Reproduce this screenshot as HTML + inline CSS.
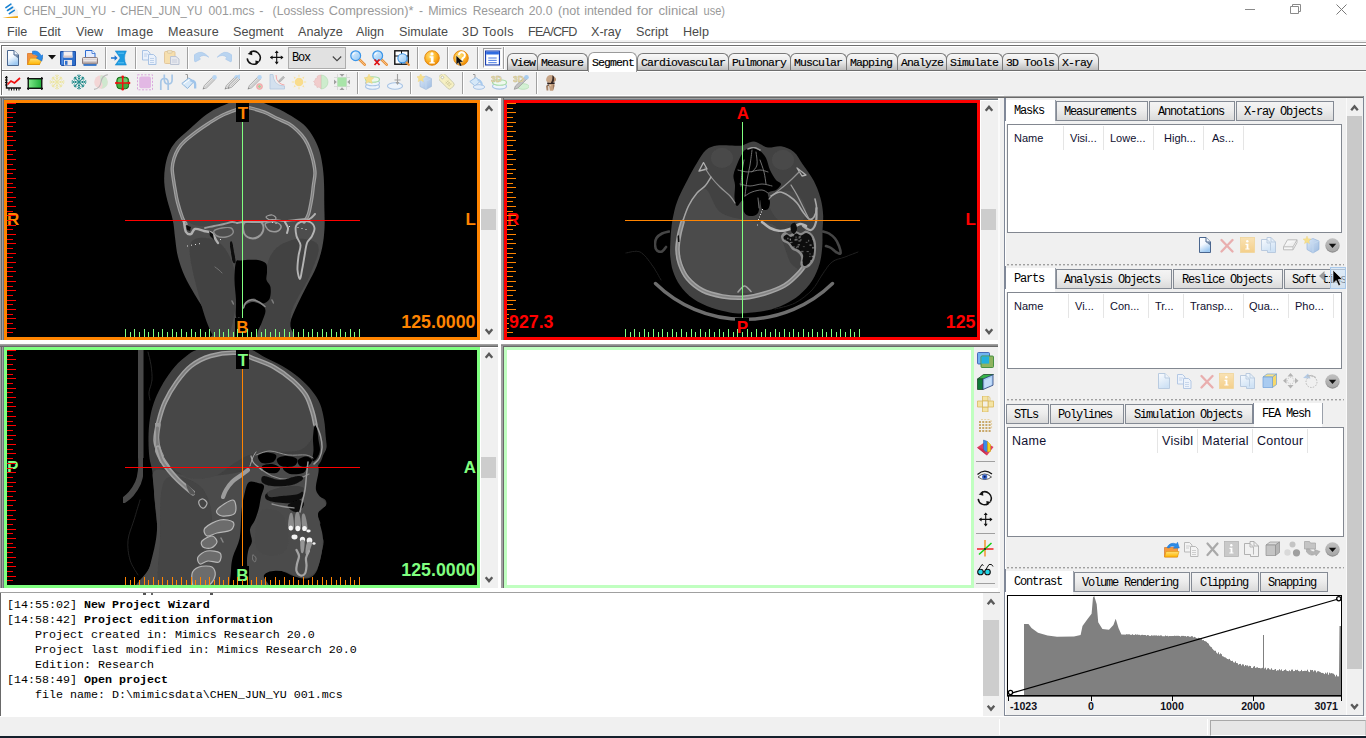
<!DOCTYPE html>
<html><head><meta charset="utf-8"><title>Mimics</title>
<style>
html,body{margin:0;padding:0;}
body{width:1366px;height:738px;overflow:hidden;background:#f0f0f0;position:relative;font-family:"Liberation Sans",sans-serif;}
div,span,svg{position:absolute;box-sizing:border-box;}
.t{white-space:pre;line-height:1;}
.mono{font-family:"Liberation Mono",monospace;}
.tab{font-family:"Liberation Mono",monospace;font-size:12px;letter-spacing:-1.2px;color:#000;white-space:pre;line-height:1;}
.hd{font-size:11px;color:#101030;white-space:pre;line-height:1;}
.hd2{font-size:12.5px;letter-spacing:0.3px;color:#101030;white-space:pre;line-height:1;}
.lbl{font-weight:bold;white-space:pre;line-height:1;}
.log{font-family:"Liberation Mono",monospace;font-size:11.67px;color:#000;white-space:pre;line-height:1;}
.log b{font-weight:bold;}
.btab{border:1px solid #848a94;background:linear-gradient(#f4f4f4,#ededed 45%,#dadada);}
</style></head>
<body>
<div style="left:0px;top:0px;width:1366px;height:41px;background:#fff;"></div>
<svg style="left:0px;top:0px;" width="20" height="20" viewBox="0 0 20 20"><path d="M11 4.200l7 6v6.500l-8.500-2z" fill="#f3f3f3"/><path d="M5.900 7.600l5-3.400M7.500 10.500l5.100-3.200M9.300 13.600l5-3.200" stroke="#1580d2" stroke-width="1.600" stroke-linecap="round"/><path d="M2.400 17.400q8-.300 15.500-1.300v1.900q-8 .300-15.500-.600z" fill="#f0a818"/></svg>
<svg style="left:0;top:0" width="740" height="22" viewBox="0 0 740 22"><g font-family="Liberation Sans" font-size="12.4" fill="#999"><text x="23.6" y="15.2" textLength="82.7" lengthAdjust="spacingAndGlyphs">CHEN_JUN_YU</text><text x="111.3" y="15.2" textLength="4.1" lengthAdjust="spacingAndGlyphs">-</text><text x="120.2" y="15.2" textLength="82.3" lengthAdjust="spacingAndGlyphs">CHEN_JUN_YU</text><text x="208.6" y="15.2" textLength="45.9" lengthAdjust="spacingAndGlyphs">001.mcs</text><text x="259.2" y="15.2" textLength="4.2" lengthAdjust="spacingAndGlyphs">-</text><text x="272.6" y="15.2" textLength="51.4" lengthAdjust="spacingAndGlyphs">(Lossless</text><text x="328.8" y="15.2" textLength="84.6" lengthAdjust="spacingAndGlyphs">Compression)*</text><text x="419" y="15.2" textLength="4.0" lengthAdjust="spacingAndGlyphs">-</text><text x="428.2" y="15.2" textLength="38.8" lengthAdjust="spacingAndGlyphs">Mimics</text><text x="472.7" y="15.2" textLength="51.3" lengthAdjust="spacingAndGlyphs">Research</text><text x="528.8" y="15.2" textLength="23.7" lengthAdjust="spacingAndGlyphs">20.0</text><text x="558" y="15.2" textLength="21.7" lengthAdjust="spacingAndGlyphs">(not</text><text x="584.2" y="15.2" textLength="47.6" lengthAdjust="spacingAndGlyphs">intended</text><text x="636.8" y="15.2" textLength="16.1" lengthAdjust="spacingAndGlyphs">for</text><text x="658.5" y="15.2" textLength="39.5" lengthAdjust="spacingAndGlyphs">clinical</text><text x="703.5" y="15.2" textLength="21.5" lengthAdjust="spacingAndGlyphs">use)</text></g></svg>
<svg style="left:1240px;top:0px" width="126" height="22" viewBox="0 0 126 22"><path d="M5 9.500h10" stroke="#8a8a8a" stroke-width="1" fill="none"/><path d="M50.500 6.500h8v7h-8z M52.500 6.500v-2h8v7h-2" stroke="#8a8a8a" stroke-width="1" fill="none"/><path d="M96.500 4.500l10 10M106.500 4.500l-10 10" stroke="#7a7a7a" stroke-width="1" fill="none"/></svg>
<span class="t m" style="left:7px;top:26px;font-size:12.6px;color:#4a4a4a;letter-spacing:0px;">File</span>
<span class="t m" style="left:39px;top:26px;font-size:12.6px;color:#4a4a4a;letter-spacing:0px;">Edit</span>
<span class="t m" style="left:76px;top:26px;font-size:12.6px;color:#4a4a4a;letter-spacing:0px;">View</span>
<span class="t m" style="left:117px;top:26px;font-size:12.6px;color:#4a4a4a;letter-spacing:0.3px;">Image</span>
<span class="t m" style="left:168px;top:26px;font-size:12.6px;color:#4a4a4a;letter-spacing:0.3px;">Measure</span>
<span class="t m" style="left:233px;top:26px;font-size:12.6px;color:#4a4a4a;letter-spacing:0px;">Segment</span>
<span class="t m" style="left:298px;top:26px;font-size:12.6px;color:#4a4a4a;letter-spacing:0px;">Analyze</span>
<span class="t m" style="left:356px;top:26px;font-size:12.6px;color:#4a4a4a;letter-spacing:0px;">Align</span>
<span class="t m" style="left:399px;top:26px;font-size:12.6px;color:#4a4a4a;letter-spacing:0px;">Simulate</span>
<span class="t m" style="left:462px;top:26px;font-size:12.6px;color:#4a4a4a;letter-spacing:0.4px;">3D Tools</span>
<span class="t m" style="left:528px;top:26px;font-size:12.6px;color:#4a4a4a;letter-spacing:-0.75px;">FEA/CFD</span>
<span class="t m" style="left:591px;top:26px;font-size:12.6px;color:#4a4a4a;letter-spacing:0px;">X-ray</span>
<span class="t m" style="left:636px;top:26px;font-size:12.6px;color:#4a4a4a;letter-spacing:0px;">Script</span>
<span class="t m" style="left:683px;top:26px;font-size:12.6px;color:#4a4a4a;letter-spacing:0px;">Help</span>
<div style="left:0px;top:40px;width:1366px;height:2px;background:#f0f0f0;"></div>
<div style="left:0px;top:42px;width:1366px;height:1px;background:#a0a0a0;"></div>
<div style="left:0px;top:43px;width:1366px;height:2px;background:#ffffff;"></div>
<div style="left:1px;top:45px;width:1365px;height:1px;background:#6e6e6e;"></div>
<div style="left:2px;top:46px;width:1364px;height:1px;background:#ffffff;"></div>
<div style="left:1px;top:45px;width:1px;height:25px;background:#6e6e6e;"></div>
<div style="left:2px;top:46px;width:1px;height:24px;background:#ffffff;"></div>
<div style="left:0px;top:45px;width:1px;height:51px;background:#ffffff;"></div>
<div style="left:2px;top:69px;width:503px;height:1px;background:#ffffff;"></div>
<div style="left:1px;top:70px;width:505px;height:1px;background:#6e6e6e;"></div>
<div style="left:2px;top:71px;width:504px;height:1px;background:#ffffff;"></div>
<div style="left:1px;top:71px;width:1px;height:24px;background:#6e6e6e;"></div>
<div style="left:2px;top:72px;width:1px;height:23px;background:#ffffff;"></div>
<div style="left:105px;top:47px;width:1px;height:22px;background:#a0a0a0;"></div>
<div style="left:106px;top:47px;width:1px;height:22px;background:#ffffff;"></div>
<div style="left:135px;top:47px;width:1px;height:22px;background:#a0a0a0;"></div>
<div style="left:136px;top:47px;width:1px;height:22px;background:#ffffff;"></div>
<div style="left:187px;top:47px;width:1px;height:22px;background:#a0a0a0;"></div>
<div style="left:188px;top:47px;width:1px;height:22px;background:#ffffff;"></div>
<div style="left:239px;top:47px;width:1px;height:22px;background:#a0a0a0;"></div>
<div style="left:240px;top:47px;width:1px;height:22px;background:#ffffff;"></div>
<div style="left:417px;top:47px;width:1px;height:22px;background:#a0a0a0;"></div>
<div style="left:418px;top:47px;width:1px;height:22px;background:#ffffff;"></div>
<div style="left:447px;top:47px;width:1px;height:22px;background:#a0a0a0;"></div>
<div style="left:448px;top:47px;width:1px;height:22px;background:#ffffff;"></div>
<div style="left:477px;top:47px;width:1px;height:22px;background:#a0a0a0;"></div>
<div style="left:478px;top:47px;width:1px;height:22px;background:#ffffff;"></div>
<div style="left:503px;top:47px;width:1px;height:22px;background:#a0a0a0;"></div>
<div style="left:504px;top:47px;width:1px;height:22px;background:#ffffff;"></div>
<div style="left:357px;top:72px;width:1px;height:22px;background:#a0a0a0;"></div>
<div style="left:358px;top:72px;width:1px;height:22px;background:#ffffff;"></div>
<div style="left:410px;top:72px;width:1px;height:22px;background:#a0a0a0;"></div>
<div style="left:411px;top:72px;width:1px;height:22px;background:#ffffff;"></div>
<div style="left:462px;top:72px;width:1px;height:22px;background:#a0a0a0;"></div>
<div style="left:463px;top:72px;width:1px;height:22px;background:#ffffff;"></div>
<div style="left:536px;top:72px;width:1px;height:22px;background:#a0a0a0;"></div>
<div style="left:537px;top:72px;width:1px;height:22px;background:#ffffff;"></div>
<div style="left:288px;top:47px;width:58px;height:22px;background:#e1e1e1;border:1px solid #adadad;"></div>
<span class="tab" style="left:292px;top:52px;">Box</span>
<svg style="left:332px;top:55px" width="10" height="8" viewBox="0 0 10 8"><path d="M.8 1.5l4.200 4.200 4.200-4.200" stroke="#444" stroke-width="1.100" fill="none"/></svg>
<div style="left:483px;top:48px;width:19px;height:20px;background:#f6f6f6;border-left:1px solid #a0a0a0;border-top:1px solid #a0a0a0;border-right:1px solid #fff;border-bottom:1px solid #fff;"></div>
<div style="left:506px;top:70px;width:860px;height:1px;background:#6e6e6e;"></div>
<div style="left:506px;top:71px;width:860px;height:1px;background:#ffffff;"></div>
<div style="left:507px;top:53px;width:31px;height:17px;background:linear-gradient(#f8f8f8,#e8e8e8 50%,#bdbdbd);border:1px solid #7a7a7a;border-bottom:none;border-radius:6px 6px 0 0;"></div>
<span class="tab" style="left:511px;top:56.5px;-webkit-text-stroke:0.15px #000;font-size:11.5px;letter-spacing:-0.9px;">View</span>
<div style="left:537px;top:53px;width:51px;height:17px;background:linear-gradient(#f8f8f8,#e8e8e8 50%,#bdbdbd);border:1px solid #7a7a7a;border-bottom:none;border-radius:6px 6px 0 0;"></div>
<span class="tab" style="left:541px;top:56.5px;-webkit-text-stroke:0.15px #000;font-size:11.5px;letter-spacing:-0.9px;">Measure</span>
<div style="left:588px;top:52px;width:49px;height:20px;background:#fff;border:1px solid #9a9a9a;border-bottom:none;border-radius:6px 6px 0 0;"></div>
<span class="tab" style="left:592px;top:56.5px;-webkit-text-stroke:0.15px #000;font-size:11.5px;letter-spacing:-0.9px;">Segment</span>
<div style="left:637px;top:53px;width:92px;height:17px;background:linear-gradient(#f8f8f8,#e8e8e8 50%,#bdbdbd);border:1px solid #7a7a7a;border-bottom:none;border-radius:6px 6px 0 0;"></div>
<span class="tab" style="left:641px;top:56.5px;-webkit-text-stroke:0.15px #000;font-size:11.5px;letter-spacing:-0.9px;">Cardiovascular</span>
<div style="left:728px;top:53px;width:63px;height:17px;background:linear-gradient(#f8f8f8,#e8e8e8 50%,#bdbdbd);border:1px solid #7a7a7a;border-bottom:none;border-radius:6px 6px 0 0;"></div>
<span class="tab" style="left:732px;top:56.5px;-webkit-text-stroke:0.15px #000;font-size:11.5px;letter-spacing:-0.9px;">Pulmonary</span>
<div style="left:790px;top:53px;width:57px;height:17px;background:linear-gradient(#f8f8f8,#e8e8e8 50%,#bdbdbd);border:1px solid #7a7a7a;border-bottom:none;border-radius:6px 6px 0 0;"></div>
<span class="tab" style="left:794px;top:56.5px;-webkit-text-stroke:0.15px #000;font-size:11.5px;letter-spacing:-0.9px;">Muscular</span>
<div style="left:846px;top:53px;width:52px;height:17px;background:linear-gradient(#f8f8f8,#e8e8e8 50%,#bdbdbd);border:1px solid #7a7a7a;border-bottom:none;border-radius:6px 6px 0 0;"></div>
<span class="tab" style="left:850px;top:56.5px;-webkit-text-stroke:0.15px #000;font-size:11.5px;letter-spacing:-0.9px;">Mapping</span>
<div style="left:897px;top:53px;width:50px;height:17px;background:linear-gradient(#f8f8f8,#e8e8e8 50%,#bdbdbd);border:1px solid #7a7a7a;border-bottom:none;border-radius:6px 6px 0 0;"></div>
<span class="tab" style="left:901px;top:56.5px;-webkit-text-stroke:0.15px #000;font-size:11.5px;letter-spacing:-0.9px;">Analyze</span>
<div style="left:946px;top:53px;width:57px;height:17px;background:linear-gradient(#f8f8f8,#e8e8e8 50%,#bdbdbd);border:1px solid #7a7a7a;border-bottom:none;border-radius:6px 6px 0 0;"></div>
<span class="tab" style="left:950px;top:56.5px;-webkit-text-stroke:0.15px #000;font-size:11.5px;letter-spacing:-0.9px;">Simulate</span>
<div style="left:1002px;top:53px;width:57px;height:17px;background:linear-gradient(#f8f8f8,#e8e8e8 50%,#bdbdbd);border:1px solid #7a7a7a;border-bottom:none;border-radius:6px 6px 0 0;"></div>
<span class="tab" style="left:1006px;top:56.5px;-webkit-text-stroke:0.15px #000;font-size:11.5px;letter-spacing:-0.9px;">3D Tools</span>
<div style="left:1058px;top:53px;width:41px;height:17px;background:linear-gradient(#f8f8f8,#e8e8e8 50%,#bdbdbd);border:1px solid #7a7a7a;border-bottom:none;border-radius:6px 6px 0 0;"></div>
<span class="tab" style="left:1062px;top:56.5px;-webkit-text-stroke:0.15px #000;font-size:11.5px;letter-spacing:-0.9px;">X-ray</span>
<svg style="left:0;top:0" width="0" height="0"><defs><linearGradient id="gDoc" x1="0" y1="0" x2="0.4" y2="1"><stop offset="0" stop-color="#fff"/><stop offset="0.5" stop-color="#f4f9ff"/><stop offset="1" stop-color="#9fcaf2"/></linearGradient><linearGradient id="gDocD" x1="0" y1="0" x2="0.4" y2="1"><stop offset="0" stop-color="#fbfcfe"/><stop offset="1" stop-color="#cfe2f5"/></linearGradient><linearGradient id="gFold" x1="0" y1="0" x2="0" y2="1"><stop offset="0" stop-color="#ffe27a"/><stop offset="1" stop-color="#ffb400"/></linearGradient><linearGradient id="gOr" x1="0" y1="0" x2="0" y2="1"><stop offset="0" stop-color="#ffc93a"/><stop offset="0.5" stop-color="#f59a10"/><stop offset="1" stop-color="#f7b63a"/></linearGradient><linearGradient id="gPr" x1="0" y1="0" x2="0" y2="1"><stop offset="0" stop-color="#f4eeee"/><stop offset="1" stop-color="#a89a9a"/></linearGradient><linearGradient id="gLens" x1="0" y1="0" x2="1" y2="1"><stop offset="0" stop-color="#e8f5ff"/><stop offset="1" stop-color="#8cc4f4"/></linearGradient><linearGradient id="gGr" x1="0" y1="0" x2="1" y2="0"><stop offset="0" stop-color="#7fe98a"/><stop offset="1" stop-color="#1fae3a"/></linearGradient><linearGradient id="gGy" x1="0" y1="0" x2="0" y2="1"><stop offset="0" stop-color="#c8c8c8"/><stop offset="1" stop-color="#8c8c8c"/></linearGradient><linearGradient id="gI" x1="0" y1="0" x2="0" y2="1"><stop offset="0" stop-color="#f9e2b4"/><stop offset="1" stop-color="#f4cf8a"/></linearGradient><linearGradient id="gCube" x1="0" y1="0" x2="1" y2="1"><stop offset="0" stop-color="#dbe8f8"/><stop offset="1" stop-color="#9dbbe0"/></linearGradient><radialGradient id="gOrR" cx="0.4" cy="0.35" r="0.7"><stop offset="0" stop-color="#ffe27a"/><stop offset="0.55" stop-color="#fdb52a"/><stop offset="1" stop-color="#ec8500"/></radialGradient></defs></svg>
<svg style="left:5px;top:50px;" width="16" height="16" viewBox="0 0 16 16"><path d="M2.5 .5h6.5l4.5 4.5v10.5h-11z" fill="url(#gDoc)" stroke="#4a668e"/><path d="M9 .5v4.5h4.5" fill="#eef4fb" stroke="#4a668e" stroke-linejoin="round"/><path d="M9.6 5.4l3.4.1v2.8z" fill="#4a6488" opacity=".75"/></svg>
<svg style="left:27px;top:50px;" width="16" height="16" viewBox="0 0 16 16"><path d="M.5 14.5v-11h5l1 1.8h6v9.2z" fill="#f3923c" stroke="#d9762a" stroke-width=".8"/><path d="M.6 14.5l2.6-6.3h12.2l-2.9 6.3z" fill="url(#gFold)" stroke="#e0960a" stroke-width=".7"/><path d="M5.5 1.2q6.3-1.2 8.6 4.6l1.9-.9-1.2 6.2-5.4-3.1 1.9-.9q-1.9-3.4-5.8-3.1z" fill="#2b8be6" stroke="#1a6fd0" stroke-width=".6"/></svg>
<svg style="left:60px;top:50px;" width="16" height="16" viewBox="0 0 16 16"><path d="M.5 1.5h15v14h-14l-1-1z" fill="#2f6fcb" stroke="#1d4fa6"/><rect x="3.5" y="1.5" width="9" height="6" fill="#f6f0f0"/><rect x="3.5" y="5.5" width="9" height="2" fill="#d9c9c9"/><rect x="4" y="10" width="8" height="5.5" fill="#eee9e9"/><rect x="5" y="10.8" width="2.5" height="4" fill="#2f6fcb"/><rect x="1.6" y="2.5" width="1.3" height="12" fill="#5b93e6"/></svg>
<svg style="left:82px;top:50px;" width="16" height="16" viewBox="0 0 16 16"><path d="M3.500 .5h6.500l3 3v5h-9.500z" fill="#e3ecff" stroke="#2c6bd0"/><path d="M10 .5v3h3" fill="#fff" stroke="#2c6bd0" stroke-width=".8"/><rect x=".5" y="7.500" width="15" height="6.500" rx="1" fill="url(#gPr)" stroke="#8b7c7c"/><rect x="1.500" y="10.300" width="13" height="1" fill="#fff" opacity=".8"/><rect x="1.500" y="14.200" width="13" height="1.600" fill="#1f68c8"/></svg>
<svg style="left:111px;top:50px;" width="16" height="16" viewBox="0 0 16 16"><path d="M4.2 .9h11.2q-3.700 7.100 0 14.200h-11.200l5-7.100z" fill="#1c9be0" stroke="#1783cc" stroke-width=".5"/><path d="M7 3.200h6M7 12.800h6" stroke="#5cc0f2" stroke-width="1"/><path d="M0 7.200h3.600v-1.900l3 2.700-3 2.700v-1.900h-3.600z" fill="#1a72d0"/></svg>
<svg style="left:142px;top:50px;" width="16" height="16" viewBox="0 0 16 16"><path d="M.5 .5h5l2.5 2.5v7h-7.500z" fill="#eaf1fb" stroke="#a9c3e4"/><path d="M6.500 4.500h5l2.500 2.500v7.500h-7.500z" fill="#eaf1fb" stroke="#a9c3e4"/><path d="M2 4h4M2 6h3M8 8.500h4M8 10.500h4M8 12.500h4" stroke="#b9cde8" stroke-width=".9"/></svg>
<svg style="left:164px;top:50px;" width="16" height="16" viewBox="0 0 16 16"><rect x=".5" y="1.500" width="10.500" height="12" rx="1" fill="#f6dfae" stroke="#e3c79c"/><rect x="3.500" y=".3" width="4.500" height="3" rx=".8" fill="#efe2c2" stroke="#d9c49c" stroke-width=".7"/><path d="M6.500 6.500h5.500l3 2.500v5.500h-8.500z" fill="#e6e8ee" stroke="#bcc4d4"/><path d="M8 10h5M8 12h5" stroke="#c6ccda" stroke-width=".9"/></svg>
<svg style="left:194px;top:50px;" width="16" height="16" viewBox="0 0 16 16"><g><path d="M0 5.200L1.600 4Q7.700 -.8 14.800 7.200Q9.500 3.600 5.200 7.400L6.400 9.200L1.200 11.900L0 10.500Z" fill="#b9d4f0" stroke="#a4c4ea" stroke-width=".6"/></g></svg>
<svg style="left:216px;top:50px;" width="16" height="16" viewBox="0 0 16 16"><g transform="translate(16,0) scale(-1,1)"><path d="M0 5.200L1.600 4Q7.700 -.8 14.800 7.200Q9.500 3.600 5.200 7.400L6.400 9.200L1.200 11.900L0 10.500Z" fill="#b9d4f0" stroke="#a4c4ea" stroke-width=".6"/></g></svg>
<svg style="left:246px;top:50px;" width="16" height="16" viewBox="0 0 16 16"><path d="M3.970 2.480A6.500 6.500 0 0 1 13.330 11.050" fill="none" stroke="#111" stroke-width="1.500"/><path d="M1.230 8.370A6.500 6.500 0 0 0 11.430 13.120" fill="none" stroke="#111" stroke-width="1.500"/><path d="M1.700 3.900l4.300-3.300.3 4.600z" fill="#111"/><path d="M14 11.600l-4.400 3.500-.2-4.700z" fill="#111"/></svg>
<svg style="left:269px;top:50px;" width="16" height="16" viewBox="0 0 16 16"><path d="M7.700 1.500v12M1.500 7.400h12.400" stroke="#111" stroke-width="1.100"/><path d="M7.700 .4l2 2.700h-4zM7.700 14.500l2-2.700h-4zM.9 7.400l2.700-2v4zM14.500 7.400l-2.700-2v4z" fill="#111"/></svg>
<svg style="left:350px;top:50px;" width="16" height="16" viewBox="0 0 16 16"><path d="M9.300 9.300l5.400 5.400" stroke="#e8923a" stroke-width="2.600" stroke-linecap="round"/><path d="M9.300 9.300l5.400 5.400" stroke="#f8c48a" stroke-width=".9" stroke-linecap="round"/><circle cx="5.700" cy="5.700" r="4.900" fill="url(#gLens)" stroke="#3a95e8" stroke-width="1.200"/><path d="M2.800 5.200a3 3 0 0 1 2.600-2.500" stroke="#fff" stroke-width="1.100" fill="none"/></svg>
<svg style="left:372px;top:50px;" width="16" height="16" viewBox="0 0 16 16"><path d="M9.300 9.300l5.400 5.400" stroke="#e8923a" stroke-width="2.600" stroke-linecap="round"/><path d="M9.300 9.300l5.400 5.400" stroke="#f8c48a" stroke-width=".9" stroke-linecap="round"/><circle cx="5.700" cy="5.700" r="4.900" fill="url(#gLens)" stroke="#3a95e8" stroke-width="1.200"/><path d="M2.800 5.200a3 3 0 0 1 2.600-2.500" stroke="#fff" stroke-width="1.100" fill="none"/><path d="M2.500 9.500l5 5.500M7.500 9.500l-5 5.500" stroke="#e01010" stroke-width="1.700"/></svg>
<svg style="left:394px;top:50px;" width="16" height="16" viewBox="0 0 16 16"><rect x=".8" y=".8" width="13.400" height="13.400" fill="#fff" stroke="#111" stroke-width="1.400"/><path d="M7.500 .8v13.400M.8 6h13.400" stroke="#111" stroke-width="1"/><path d="M11.500 11.500l3.300 3.300" stroke="#e8923a" stroke-width="2.200" stroke-linecap="round"/><circle cx="8.500" cy="8.300" r="4.600" fill="url(#gLens)" stroke="#3a95e8" stroke-width="1.100"/></svg>
<svg style="left:424px;top:50px;" width="16" height="16" viewBox="0 0 16 16"><circle cx="8" cy="8" r="7.300" fill="url(#gOrR)" stroke="#e08208" stroke-width=".9"/><circle cx="8" cy="3.900" r="1.600" fill="#fff"/><path d="M5.600 6.300h3.900v5.900h1.300v1.400h-5.400v-1.400h1.400v-4.500h-1.200z" fill="#fff"/></svg>
<svg style="left:453px;top:50px;" width="16" height="16" viewBox="0 0 16 16"><circle cx="8" cy="8" r="7.300" fill="url(#gOrR)" stroke="#e08208" stroke-width=".9"/><path d="M6 4.300a3 3 0 1 1 4.200 3.600q-1 .6-1 1.800" fill="none" stroke="#fff" stroke-width="2" stroke-linecap="round"/><path d="M3.200 5.500v9.200l2.200-2 1.600 3.600 1.800-.8-1.600-3.500h3z" fill="#111" stroke="#fff" stroke-width=".3"/></svg>
<svg style="left:485px;top:50px;" width="15" height="16" viewBox="0 0 16 16"><rect x=".6" y=".6" width="14.800" height="14.800" fill="#fff" stroke="#1a3fb0" stroke-width="1.200"/><rect x="1.200" y="1.200" width="13.600" height="2.600" fill="#2f6be0"/><rect x="1.200" y="3.800" width="13.600" height="1" fill="#8fb0f0"/><path d="M3.500 8h9M3.500 10.500h9M3.500 13h9" stroke="#3a6ee0" stroke-width="1"/></svg>
<svg style="left:48px;top:55px;" width="8" height="5" viewBox="0 0 8 5"><path d="M0 0h8l-4 4.500z" fill="#111"/></svg>
<svg style="left:5px;top:74px;" width="16" height="17" viewBox="0 0 16 17"><path d="M1.500 2v12h14.500" stroke="#111" stroke-width="1.400" fill="none"/><path d="M0 3.500h2.500M0 6h2.500M0 8.500h2.500M0 11h2.500M4 14v2.500M6.500 14v2.500M9 14v2.500M11.500 14v2.500M14 14v2.500" stroke="#111" stroke-width="1"/><path d="M2.500 10.500l3.500-3.500 3.500 2 5.500-5" stroke="#f01010" stroke-width="1.700" fill="none"/></svg>
<svg style="left:27px;top:74px;" width="16" height="17" viewBox="0 0 16 17"><rect x="1.500" y="5" width="13" height="9" fill="url(#gGr)" stroke="#0b6a1c" stroke-width=".8"/><path d="M1.200 3v13M14.800 3v13M0 4.700h16M0 14.300h16" stroke="#111" stroke-width="1.300"/></svg>
<svg style="left:49px;top:74px;" width="16" height="17" viewBox="0 0 16 17"><g opacity="0.9"><g transform="rotate(0 8 8)"><path d="M8 8v-7.500M8 2.800l-1.800-1.800M8 2.800l1.800-1.800M8 5l-1.400-1.400M8 5l1.400-1.400" stroke="#ece49a" stroke-width="1" fill="none"/></g><g transform="rotate(90 8 8)"><path d="M8 8v-7.500M8 2.800l-1.800-1.800M8 2.800l1.800-1.800M8 5l-1.400-1.400M8 5l1.400-1.400" stroke="#ece49a" stroke-width="1" fill="none"/></g><g transform="rotate(180 8 8)"><path d="M8 8v-7.500M8 2.800l-1.800-1.800M8 2.800l1.800-1.800M8 5l-1.400-1.400M8 5l1.400-1.400" stroke="#ece49a" stroke-width="1" fill="none"/></g><g transform="rotate(270 8 8)"><path d="M8 8v-7.500M8 2.800l-1.800-1.800M8 2.800l1.800-1.800M8 5l-1.400-1.400M8 5l1.400-1.400" stroke="#ece49a" stroke-width="1" fill="none"/></g><g transform="rotate(45 8 8)"><path d="M8 8v-6.800M8 3.400l-1.700-1.500M8 3.400l1.700-1.500" stroke="#ece49a" stroke-width="1" fill="none"/></g><g transform="rotate(135 8 8)"><path d="M8 8v-6.800M8 3.400l-1.700-1.500M8 3.400l1.700-1.500" stroke="#ece49a" stroke-width="1" fill="none"/></g><g transform="rotate(225 8 8)"><path d="M8 8v-6.800M8 3.400l-1.700-1.500M8 3.400l1.700-1.500" stroke="#ece49a" stroke-width="1" fill="none"/></g><g transform="rotate(315 8 8)"><path d="M8 8v-6.800M8 3.400l-1.700-1.500M8 3.400l1.700-1.500" stroke="#ece49a" stroke-width="1" fill="none"/></g></g></svg>
<svg style="left:71px;top:74px;" width="16" height="17" viewBox="0 0 16 17"><g opacity="1"><g transform="rotate(0 8 8)"><path d="M8 8v-7.500M8 2.800l-1.800-1.800M8 2.800l1.800-1.800M8 5l-1.400-1.400M8 5l1.400-1.400" stroke="#1f8a8a" stroke-width="1" fill="none"/></g><g transform="rotate(90 8 8)"><path d="M8 8v-7.500M8 2.800l-1.800-1.800M8 2.800l1.800-1.800M8 5l-1.400-1.400M8 5l1.400-1.400" stroke="#1f8a8a" stroke-width="1" fill="none"/></g><g transform="rotate(180 8 8)"><path d="M8 8v-7.500M8 2.800l-1.800-1.800M8 2.800l1.800-1.800M8 5l-1.400-1.400M8 5l1.400-1.400" stroke="#1f8a8a" stroke-width="1" fill="none"/></g><g transform="rotate(270 8 8)"><path d="M8 8v-7.500M8 2.800l-1.800-1.800M8 2.800l1.800-1.800M8 5l-1.400-1.400M8 5l1.400-1.400" stroke="#1f8a8a" stroke-width="1" fill="none"/></g><g transform="rotate(45 8 8)"><path d="M8 8v-6.800M8 3.400l-1.700-1.500M8 3.400l1.700-1.500" stroke="#1f8a8a" stroke-width="1" fill="none"/></g><g transform="rotate(135 8 8)"><path d="M8 8v-6.800M8 3.400l-1.700-1.500M8 3.400l1.700-1.500" stroke="#1f8a8a" stroke-width="1" fill="none"/></g><g transform="rotate(225 8 8)"><path d="M8 8v-6.800M8 3.400l-1.700-1.500M8 3.400l1.700-1.500" stroke="#1f8a8a" stroke-width="1" fill="none"/></g><g transform="rotate(315 8 8)"><path d="M8 8v-6.800M8 3.400l-1.700-1.500M8 3.400l1.700-1.500" stroke="#1f8a8a" stroke-width="1" fill="none"/></g></g></svg>
<svg style="left:93px;top:74px;" width="16" height="17" viewBox="0 0 16 17"><circle cx="8" cy="8" r="6.800" fill="#f3d6d6"/><path d="M8 1.200a6.800 6.800 0 0 1 0 13.600q3-3 .5-6.800t-.5-6.800z" fill="#cfe8cf"/><path d="M14.800 .6q-6 1-6.800 7.400t-7 7.400" stroke="#b9b9b9" stroke-width="1.100" fill="none"/></svg>
<svg style="left:115px;top:74px;" width="16" height="17" viewBox="0 0 16 17"><rect x="1.800" y="3.200" width="11.800" height="11.600" rx="3.200" fill="#3fae3f" stroke="#146a14" stroke-width="1"/><rect x="3" y="4.300" width="9.400" height="4.600" rx="2" fill="#7fd67f" opacity=".7"/><path d="M7.700 2v14M.5 9h14.500" stroke="#f01010" stroke-width="1.500"/><circle cx="7.700" cy="2.700" r="1.300" fill="#f01010"/><circle cx="7.700" cy="15.300" r="1.300" fill="#f01010"/><circle cx="1.400" cy="9" r="1.300" fill="#f01010"/><circle cx="14.100" cy="9" r="1.300" fill="#f01010"/></svg>
<svg style="left:137px;top:74px;" width="16" height="17" viewBox="0 0 16 17"><rect x=".5" y=".8" width="15" height="15" fill="none" stroke="#d9a6dc" stroke-width="1" stroke-dasharray="2 1.500"/><rect x="2.200" y="2.500" width="11.800" height="11.800" rx="2" fill="#e2b8e4"/></svg>
<svg style="left:159px;top:74px;" width="16" height="17" viewBox="0 0 16 17"><path d="M1.800 16v-7.500q0-4 3.700-4t3.700 4.500v7" stroke="#a6c6e6" stroke-width="1.700" fill="none"/><path d="M5.300 .4v5.100q0 4.500 3.900 4.500t3.900-4v-5.600" stroke="#a6c6e6" stroke-width="1.700" fill="none"/></svg>
<svg style="left:181px;top:74px;" width="16" height="17" viewBox="0 0 16 17"><path d="M6.500 6v-5.500h-2" stroke="#9a9a9a" stroke-width="1" fill="none"/><path d="M.8 9.500l7-5.500 5.200 3.500-6.500 7z" fill="#d6e8f8" stroke="#8fb6dc" stroke-width="1"/><path d="M9 5.500q6-.5 6.300 4.500v4.500h-2.300v-4q-.5-3-3.500-2.700z" fill="#9fc4ea"/><path d="M2.500 10l5.500-4" stroke="#fff" stroke-width="1"/></svg>
<svg style="left:202px;top:74px;" width="16" height="17" viewBox="0 0 16 17"><g transform="translate(0.0,0.0)"><path d="M1.200 14.800l1.200-3.300 8.800-8.800 2.300 2.300-8.800 8.800z" fill="#e2e2e2" stroke="#a4a4a4" stroke-width=".9"/><path d="M3.600 12.900l8.300-8.300" stroke="#b8b8b8" stroke-width=".8"/><circle cx="12.600" cy="3.200" r="2.200" fill="#b7d6f4"/><path d="M.6 15.400l.9-2 1.100 1.100z" fill="#888"/></g></svg>
<svg style="left:224px;top:74px;" width="16" height="17" viewBox="0 0 16 17"><g transform="translate(0.0,0.0)"><path d="M1.200 14.800l1.200-3.300 8.800-8.800 2.300 2.300-8.800 8.800z" fill="#e2e2e2" stroke="#a4a4a4" stroke-width=".9"/><path d="M3.600 12.900l8.300-8.300" stroke="#b8b8b8" stroke-width=".8"/><circle cx="12.600" cy="3.200" r="2.200" fill="#b7d6f4"/><path d="M.6 15.400l.9-2 1.100 1.100z" fill="#888"/></g><g transform="translate(3.0,-0.5)"><path d="M1.200 14.800l1.200-3.300 8.800-8.800 2.300 2.300-8.800 8.800z" fill="#e2e2e2" stroke="#a4a4a4" stroke-width=".9"/><path d="M3.600 12.900l8.300-8.300" stroke="#b8b8b8" stroke-width=".8"/><circle cx="12.600" cy="3.200" r="2.200" fill="#b7d6f4"/><path d="M.6 15.400l.9-2 1.100 1.100z" fill="#888"/></g></svg>
<svg style="left:247px;top:74px;" width="16" height="17" viewBox="0 0 16 17"><g transform="translate(0.0,0.0)"><path d="M1.200 14.800l1.200-3.300 8.800-8.800 2.300 2.300-8.800 8.800z" fill="#e2e2e2" stroke="#a4a4a4" stroke-width=".9"/><path d="M3.600 12.900l8.300-8.300" stroke="#b8b8b8" stroke-width=".8"/><circle cx="12.600" cy="3.200" r="2.200" fill="#b7d6f4"/><path d="M.6 15.400l.9-2 1.100 1.100z" fill="#888"/></g><circle cx="12.500" cy="12.500" r="3" fill="#f4b4b4" stroke="#eaa0a0" stroke-width=".6"/><path d="M11 12.500h3M12.500 11v3" stroke="#9fd69f" stroke-width="1.200"/></svg>
<svg style="left:269px;top:74px;" width="16" height="17" viewBox="0 0 16 17"><path d="M1 .5v14.500h14.500v-3q-6.500 0-9-3.500t-2.500-8z" fill="#d3e0ee" stroke="#b4c8de" stroke-width=".8"/><path d="M7 1q0 5 3 7.500t5.500 2.500" stroke="#f4a8a8" stroke-width="1" fill="none"/><path d="M10.200 6.200l4-4 1.400 1.400-4 4-1.900.5z" fill="#bdbdbd" stroke="#9e9e9e" stroke-width=".5"/></svg>
<svg style="left:291px;top:74px;" width="16" height="17" viewBox="0 0 16 17"><path d="M8 .3l1 2.300h-2z" fill="#f8e3a0" transform="rotate(0 8 8)"/><path d="M8 .3l1 2.300h-2z" fill="#f8e3a0" transform="rotate(45 8 8)"/><path d="M8 .3l1 2.300h-2z" fill="#f8e3a0" transform="rotate(90 8 8)"/><path d="M8 .3l1 2.300h-2z" fill="#f8e3a0" transform="rotate(135 8 8)"/><path d="M8 .3l1 2.300h-2z" fill="#f8e3a0" transform="rotate(180 8 8)"/><path d="M8 .3l1 2.300h-2z" fill="#f8e3a0" transform="rotate(225 8 8)"/><path d="M8 .3l1 2.300h-2z" fill="#f8e3a0" transform="rotate(270 8 8)"/><path d="M8 .3l1 2.300h-2z" fill="#f8e3a0" transform="rotate(315 8 8)"/><circle cx="8" cy="8" r="4.300" fill="#f9dc8c"/></svg>
<svg style="left:313px;top:74px;" width="16" height="17" viewBox="0 0 16 17"><path d="M8 1a7 7 0 0 1 0 14z" fill="#cdeccd" stroke="#b0d8b0" stroke-width=".6"/><path d="M8 1q-2.500 0-4 1.500l.5 1.500-2 .5-.5 2-1.500 1 1.500 1.500-.5 2 2 .500.500 2 2-.500 2 1.500z" fill="#f1cccc" stroke="#e3b4b4" stroke-width=".5"/></svg>
<svg style="left:334px;top:74px;" width="16" height="17" viewBox="0 0 16 17"><path d="M0 3.500h16M0 12.500h16M3.500 0v16M12.500 0v16" stroke="#dadada" stroke-width="1"/><rect x="3.500" y="3.500" width="9" height="9" fill="#a8e4a8"/><path d="M5.500 0h5l-2.500 2.800zM5.500 16h5l-2.500-2.800zM0 5.500v5l2.800-2.500zM16 5.500v5l-2.800-2.500z" fill="#a0a0a0"/></svg>
<svg style="left:364px;top:74px;" width="16" height="17" viewBox="0 0 16 17"><ellipse cx="8.500" cy="12.500" rx="7" ry="2.800" fill="#eef4fb" stroke="#a9c5e6" stroke-width="1.100"/><ellipse cx="8.500" cy="9" rx="7" ry="2.800" fill="#eef4fb" stroke="#a9c5e6" stroke-width="1.100"/><ellipse cx="8.500" cy="5.500" rx="7" ry="2.800" fill="#eef9ee" stroke="#a6dca6" stroke-width="1.100"/><path d="M5 0l1.500 3.300 3.500.4-2.600 2.400.8 3.500-3.200-1.800-3.200 1.800.8-3.500-2.600-2.400 3.500-.4z" fill="#f6df8e" stroke="#ecd27a" stroke-width=".4"/></svg>
<svg style="left:387px;top:74px;" width="16" height="17" viewBox="0 0 16 17"><ellipse cx="8" cy="12" rx="7.500" ry="3.200" fill="#eef4fb" stroke="#a9c5e6" stroke-width="1.100"/><path d="M10.500 0v9.500M7.500 6h6" stroke="#a0a0a0" stroke-width="1.100"/><path d="M10.500 11l-2-3h4z" fill="#a0a0a0"/></svg>
<svg style="left:417px;top:74px;" width="16" height="17" viewBox="0 0 16 17"><path d="M3 4.500l6-2.500 5.500 2.500v8l-5.500 3-6-3z" fill="url(#gCube)" stroke="#9db9da" stroke-width=".6"/><path d="M3 4.500l6 2.500 5.500-2.500M9 7v8.500" stroke="#c7daf0" stroke-width=".8" fill="none"/><g transform="translate(-.5,-.5) scale(.85)"><path d="M5 0l1.500 3.300 3.500.4-2.600 2.400.8 3.500-3.200-1.800-3.200 1.800.8-3.500-2.600-2.400 3.500-.4z" fill="#f6df8e" stroke="#ecd27a" stroke-width=".4"/></g></svg>
<svg style="left:439px;top:74px;" width="16" height="17" viewBox="0 0 16 17"><g transform="rotate(-45 8 8)"><rect x="4" y="-1.500" width="8" height="17" rx="2.500" fill="#f6f0c2" stroke="#c9c9b0" stroke-width=".9"/><circle cx="8" cy="1.500" r="1.300" fill="#fff" stroke="#b0b0a0" stroke-width=".7"/><path d="M6 8h4M6 10h4M6 12h4M7 7v6M9 7v6" stroke="#cfc89a" stroke-width=".7"/></g></svg>
<svg style="left:469px;top:74px;" width="16" height="17" viewBox="0 0 16 17"><path d="M6 5.500v-5h-2" stroke="#9a9a9a" stroke-width="1" fill="none"/><path d="M.8 7.500l6-4 4.700 3.500-5.500 5z" fill="#d6e8f8" stroke="#9fc0e4" stroke-width="1"/><ellipse cx="10" cy="13" rx="5.700" ry="2.300" fill="#e4eefa" stroke="#a9c5e6" stroke-width="1"/><path d="M8.500 5q5 .500 5.500 6.500h-2q-.500-4-3.500-4.500z" fill="#a8caee"/></svg>
<svg style="left:491px;top:74px;" width="16" height="17" viewBox="0 0 16 17"><ellipse cx="8.500" cy="12.300" rx="7" ry="2.800" fill="#eef4fb" stroke="#a9c5e6" stroke-width="1.100"/><ellipse cx="8.500" cy="8.500" rx="7" ry="2.800" fill="#eef9ee" stroke="#a6dca6" stroke-width="1.100"/><text x="0" y="7.500" font-family="Liberation Sans" font-weight="bold" font-size="8.500" fill="#f5e7a6" stroke="#b9b190" stroke-width=".35">3D</text></svg>
<svg style="left:513px;top:74px;" width="16" height="17" viewBox="0 0 16 17"><ellipse cx="10" cy="12.500" rx="6" ry="2.800" fill="#d4f0d4" stroke="#b4e0b4" stroke-width=".8"/><path d="M1.200 15.300l1.200-3.300 9.300-8.800 2 2-9 9z" fill="#c4c4c4" stroke="#9a9a9a" stroke-width=".8"/><circle cx="13.500" cy="3.300" r="2.300" fill="#a9cdee"/><text x="0" y="7.500" font-family="Liberation Sans" font-weight="bold" font-size="8.500" fill="#f5e7a6" stroke="#b9b190" stroke-width=".35">3D</text></svg>
<svg style="left:543px;top:74px;" width="16" height="17" viewBox="0 0 16 17"><path d="M3.200 5q.300-2.800 2.800-3.800 2.500-.600 4 .200 1.500 1.200 2.500 2.300 1 1.800-.200 3.300-1.200 1.800-3.300 2.300-3.500.300-5-1.300-1.200-1.500-.800-3z" fill="#c7a587"/><path d="M9.300 1.200q1.300.600 1.800 2 .300 2.500-.500 4.500l-1.300 1.800-1.800-.300q1.500-2 1.800-4.200.200-2.200 0-3.800z" fill="#3a2a26"/><path d="M11.300 3.500q1.500.500 1.600 2.200-.300 1.500-1.600 2z" fill="#b08a6c"/><path d="M4.200 8.600q3.500 1 7.300-.300l.200 1.800q-3.800 1-7.500.200z" fill="#2c2020"/><path d="M5.600 10.300q3-.500 5.700-.200.700 1.500-.200 3.400l-1 3.200h-3.300l-.500-3.200z" fill="#c4a080"/><path d="M6 10.600q1.500-.500 2.300.300 0 1.300-1.300 1.500z" fill="#e6c8a6"/><path d="M9.800 10.500l1.300.2q.500 1.500-.300 3l-.800 2.500z" fill="#9a7860"/><path d="M3 12q1-1.200 2.200-.800l.200 5.200h-1.800z" fill="#a8856a"/><path d="M4.200 11.300l1.300-.800.300 1.800z" fill="#3c2c26"/></svg>
<div style="left:0px;top:95px;width:1004px;height:1px;background:#fff;"></div>
<div style="left:0px;top:96px;width:1004px;height:1px;background:#a0a0a0;"></div>
<div style="left:0px;top:97px;width:1004px;height:1px;background:#696969;"></div>
<div style="left:0px;top:98px;width:1004px;height:1px;background:#a0a0a0;"></div>
<div style="left:0px;top:99px;width:1004px;height:1px;background:#6d7780;"></div>
<div style="left:0px;top:100px;width:1004px;height:492px;background:#fff;"></div>
<div style="left:0px;top:98px;width:1px;height:490px;background:#a0a0a0;"></div>
<div style="left:1px;top:98px;width:1px;height:490px;background:#696969;"></div>
<div style="left:2px;top:98px;width:1px;height:490px;background:#a0a0a0;"></div>
<div style="left:3px;top:98px;width:1px;height:490px;background:#6d7780;"></div>
<div style="left:501px;top:98px;width:1px;height:490px;background:#a0a0a0;"></div>
<div style="left:502px;top:98px;width:1px;height:490px;background:#a0a0a0;"></div>
<div style="left:503px;top:98px;width:1px;height:490px;background:#696969;"></div>
<div style="left:498px;top:98px;width:3px;height:494px;background:#fff;"></div>
<div style="left:998px;top:98px;width:2px;height:494px;background:#fafafa;"></div>
<div style="left:1000px;top:98px;width:4px;height:494px;background:#f0f0f0;"></div>
<div style="left:0px;top:340px;width:998px;height:4px;background:#fff;"></div>
<div style="left:0px;top:344px;width:498px;height:1px;background:#a0a0a0;"></div>
<div style="left:0px;top:345px;width:498px;height:1px;background:#8c8c8c;"></div>
<div style="left:0px;top:346px;width:498px;height:1px;background:#696969;"></div>
<div style="left:501px;top:344px;width:497px;height:1px;background:#a0a0a0;"></div>
<div style="left:501px;top:345px;width:497px;height:1px;background:#8c8c8c;"></div>
<div style="left:503px;top:346px;width:495px;height:1px;background:#696969;"></div>
<div style="left:0px;top:588px;width:998px;height:4px;background:#fff;"></div>
<div style="left:0px;top:592px;width:1000px;height:1px;background:#a0a0a0;"></div>
<div style="left:4px;top:100px;width:476px;height:240px;background:#000;border:3px solid #ff8400;"></div>
<svg style="left:7px;top:103px" width="470" height="234" viewBox="0 0 470 234"><defs><filter id="b1" x="-5%" y="-5%" width="110%" height="110%"><feGaussianBlur stdDeviation="0.7"/></filter><filter id="c1" x="-5%" y="-5%" width="110%" height="110%"><feGaussianBlur stdDeviation="0.45"/></filter><clipPath id="k1"><rect x="7" y="103" width="470" height="236"/></clipPath></defs><g transform="translate(-7,-103)" clip-path="url(#k1)"><path d="M228.3 103.2C224.4 105.2 218.4 107.1 213.7 109.8C209.0 112.5 204.5 116.0 200.2 119.5C195.9 123.0 192.1 126.8 188.0 130.5C183.9 134.2 179.2 137.6 175.9 141.5C172.7 145.4 170.3 149.2 168.5 153.7C166.7 158.2 165.6 163.4 164.9 168.3C164.2 173.2 164.0 178.2 164.3 183.0C164.6 187.8 165.4 192.0 166.5 197.0C167.6 202.0 169.8 208.5 171.0 213.0C172.2 217.5 172.8 219.8 173.5 224.0C174.2 228.2 174.3 232.5 175.1 238.0C175.8 243.5 176.4 250.7 178.0 257.0C179.6 263.3 181.8 269.7 184.6 276.0C187.4 282.3 191.4 288.7 195.0 295.0C198.6 301.3 203.4 307.6 206.4 313.9C209.4 320.2 211.7 328.4 213.0 332.8C214.3 337.2 201.5 338.8 214.0 340.0C226.5 341.2 275.4 342.8 288.0 340.0C300.6 337.2 288.3 329.2 289.9 323.3C291.5 317.4 294.6 310.7 297.5 304.4C300.4 298.1 303.8 291.7 307.0 285.4C310.2 279.1 314.0 272.7 316.5 266.4C319.0 260.1 320.9 253.7 322.2 247.4C323.5 241.1 324.1 235.6 324.5 228.5C324.9 221.4 324.4 212.2 324.3 205.0C324.2 197.8 324.3 191.5 324.1 185.4C323.9 179.3 323.6 173.8 322.9 168.3C322.2 162.8 321.3 157.3 319.9 152.4C318.5 147.5 316.7 143.3 314.4 139.0C312.1 134.7 309.1 130.2 305.9 126.8C302.6 123.3 299.2 121.1 294.9 118.3C290.6 115.5 285.3 112.3 280.2 109.8C275.1 107.3 268.4 105.2 264.4 103.2C260.4 101.2 259.1 99.2 256.0 98.0C252.9 96.8 249.2 96.0 246.0 96.0C242.8 96.0 239.9 96.8 237.0 98.0C234.1 99.2 232.2 101.2 228.3 103.2Z" fill="#4d4d4d" filter="url(#b1)"/><path d="M241.0 109.0C238.2 109.5 236.3 110.2 233.0 111.5C229.7 112.8 225.0 114.4 221.0 116.5C217.0 118.6 213.0 121.3 209.0 124.0C205.0 126.7 201.0 129.4 197.0 132.5C193.0 135.6 188.0 139.5 185.0 142.3C182.0 145.1 180.7 146.7 179.0 149.5C177.3 152.3 176.0 155.8 175.0 159.0C174.0 162.2 173.3 164.8 173.2 168.5C173.1 172.2 173.8 175.6 174.5 181.0C175.2 186.4 176.1 195.0 177.5 201.0C178.9 207.0 179.2 212.8 183.0 217.0C186.8 221.2 190.0 224.8 200.0 226.0C210.0 227.2 228.8 224.7 243.0 224.0C257.2 223.3 274.5 223.3 285.0 222.0C295.5 220.7 301.6 220.3 306.0 216.0C310.4 211.7 310.2 203.2 311.5 196.0C312.8 188.8 313.9 178.8 314.0 173.0C314.1 167.2 313.1 165.0 312.2 161.0C311.3 157.0 309.9 152.6 308.5 149.0C307.1 145.4 305.8 142.5 303.8 139.5C301.8 136.5 299.1 133.7 296.5 131.2C293.9 128.7 291.4 126.5 288.0 124.5C284.6 122.5 280.0 120.9 276.0 119.0C272.0 117.1 268.3 114.7 264.0 113.0C259.7 111.3 253.8 109.4 250.0 108.7C246.2 108.0 243.8 108.5 241.0 109.0Z" fill="#444444" filter="url(#b1)"/><path d="M190.0 245.0C192.5 235.0 208.0 237.2 215.0 240.0C222.0 242.8 228.5 252.0 232.0 262.0C235.5 272.0 236.7 287.5 236.0 300.0C235.3 312.5 231.7 330.8 228.0 337.0C224.3 343.2 218.7 343.2 214.0 337.0C209.3 330.8 204.0 315.3 200.0 300.0C196.0 284.7 187.5 255.0 190.0 245.0Z" fill="#424242" filter="url(#b1)"/><path d="M268.0 262.0C273.0 245.8 283.7 242.8 292.0 240.0C300.3 237.2 315.0 239.2 318.0 245.0C321.0 250.8 314.3 264.2 310.0 275.0C305.7 285.8 295.7 299.7 292.0 310.0C288.3 320.3 293.0 332.5 288.0 337.0C283.0 341.5 265.3 349.5 262.0 337.0C258.7 324.5 263.0 278.2 268.0 262.0Z" fill="#424242" filter="url(#b1)"/><path d="M241.0 108.3C239.7 108.7 236.5 109.5 233.2 110.8C229.9 112.1 225.1 113.8 221.0 115.9C216.9 118.0 212.9 120.6 208.8 123.2C204.7 125.8 200.7 128.6 196.6 131.7C192.5 134.8 187.4 138.7 184.4 141.5C181.4 144.3 180.0 146.0 178.3 148.8C176.6 151.6 175.0 155.2 174.0 158.5C173.0 161.8 172.3 164.6 172.2 168.3C172.1 172.0 173.1 176.9 173.6 180.5C174.1 184.1 174.5 186.4 175.2 190.0C175.8 193.6 176.3 197.3 177.5 202.0C178.7 206.7 181.1 214.3 182.5 218.0C183.9 221.7 185.4 223.0 186.0 224.0" fill="none" stroke="#a0a0a0" stroke-width="3.4" stroke-linejoin="round" stroke-linecap="round" filter="url(#c1)" opacity="1"/><path d="M243.0 107.4C244.1 107.5 246.2 107.1 249.8 107.9C253.4 108.7 259.9 110.5 264.4 112.2C268.9 113.9 272.5 116.4 276.6 118.3C280.7 120.2 285.4 121.8 288.8 123.8C292.2 125.8 294.7 128.0 297.3 130.5C299.9 133.0 302.6 135.9 304.6 139.0C306.6 142.1 308.1 145.1 309.5 148.8C310.9 152.5 312.3 156.9 313.2 161.0C314.1 165.1 315.0 169.1 315.0 173.2C315.0 177.3 313.9 181.4 313.4 185.4C312.9 189.4 312.8 192.2 312.0 197.0C311.2 201.8 309.8 209.8 308.5 214.0C307.2 218.2 304.8 220.7 304.0 222.0" fill="none" stroke="#a0a0a0" stroke-width="3.4" stroke-linejoin="round" stroke-linecap="round" filter="url(#c1)" opacity="1"/><path d="M241.0 108.3C239.7 108.7 236.5 109.5 233.2 110.8C229.9 112.1 225.1 113.8 221.0 115.9C216.9 118.0 212.9 120.6 208.8 123.2C204.7 125.8 200.7 128.6 196.6 131.7C192.5 134.8 187.4 138.7 184.4 141.5C181.4 144.3 180.0 146.0 178.3 148.8C176.6 151.6 175.0 155.2 174.0 158.5C173.0 161.8 172.3 164.6 172.2 168.3C172.1 172.0 173.1 176.9 173.6 180.5C174.1 184.1 174.5 186.4 175.2 190.0C175.8 193.6 176.3 197.3 177.5 202.0C178.7 206.7 181.1 214.3 182.5 218.0C183.9 221.7 185.4 223.0 186.0 224.0" fill="none" stroke="#7c7c7c" stroke-width="1.1" stroke-linejoin="round" stroke-linecap="round" filter="url(#c1)" opacity="1"/><path d="M243.0 107.4C244.1 107.5 246.2 107.1 249.8 107.9C253.4 108.7 259.9 110.5 264.4 112.2C268.9 113.9 272.5 116.4 276.6 118.3C280.7 120.2 285.4 121.8 288.8 123.8C292.2 125.8 294.7 128.0 297.3 130.5C299.9 133.0 302.6 135.9 304.6 139.0C306.6 142.1 308.1 145.1 309.5 148.8C310.9 152.5 312.3 156.9 313.2 161.0C314.1 165.1 315.0 169.1 315.0 173.2C315.0 177.3 313.9 181.4 313.4 185.4C312.9 189.4 312.8 192.2 312.0 197.0C311.2 201.8 309.8 209.8 308.5 214.0C307.2 218.2 304.8 220.7 304.0 222.0" fill="none" stroke="#7c7c7c" stroke-width="1.1" stroke-linejoin="round" stroke-linecap="round" filter="url(#c1)" opacity="1"/><path d="M184.0 222.0C184.3 223.7 184.8 230.0 186.0 232.0C187.2 234.0 189.5 234.5 191.0 234.0C192.5 233.5 192.8 229.5 195.0 229.0C197.2 228.5 201.2 230.3 204.0 231.0C206.8 231.7 210.0 231.5 212.0 233.0C214.0 234.5 215.0 238.3 216.0 240.0C217.0 241.7 217.7 242.5 218.0 243.0" fill="none" stroke="#b0b0b0" stroke-width="2.4" stroke-linejoin="round" stroke-linecap="round" filter="url(#c1)" opacity="1"/><path d="M205.0 228.0C206.5 227.7 210.8 226.7 214.0 226.0C217.2 225.3 221.0 224.7 224.0 224.0C227.0 223.3 229.8 222.2 232.0 222.0C234.2 221.8 236.2 222.8 237.0 223.0" fill="none" stroke="#9c9c9c" stroke-width="1.8" stroke-linejoin="round" stroke-linecap="round" filter="url(#c1)" opacity="1"/><path d="M214.0 231.0C214.8 229.7 219.2 228.5 222.0 228.0C224.8 227.5 229.2 227.2 231.0 228.0C232.8 228.8 233.8 231.5 233.0 233.0C232.2 234.5 228.7 236.5 226.0 237.0C223.3 237.5 219.0 237.0 217.0 236.0C215.0 235.0 213.2 232.3 214.0 231.0Z" fill="none" stroke="#8e8e8e" stroke-width="1.4" stroke-linejoin="round" stroke-linecap="round" filter="url(#c1)" opacity="1"/><path d="M186 225 L191 227 L190 231 L187 230Z" fill="#101010" filter="url(#c1)"/><path d="M209 231 L213 234 L214 240 L210 236Z" fill="#101010" filter="url(#c1)"/><path d="M244.0 223.0C245.7 221.0 251.0 221.0 254.0 221.0C257.0 221.0 260.5 221.3 262.0 223.0C263.5 224.7 263.7 228.7 263.0 231.0C262.3 233.3 260.2 235.8 258.0 237.0C255.8 238.2 252.3 238.7 250.0 238.0C247.7 237.3 245.0 235.5 244.0 233.0C243.0 230.5 242.3 225.0 244.0 223.0Z" fill="none" stroke="#9a9a9a" stroke-width="2.0" stroke-linejoin="round" stroke-linecap="round" filter="url(#c1)" opacity="1"/><path d="M237.0 223.0C238.2 222.8 239.8 222.2 244.0 222.0C248.2 221.8 257.3 222.3 262.0 222.0C266.7 221.7 268.3 220.2 272.0 220.0C275.7 219.8 280.0 221.0 284.0 221.0C288.0 221.0 292.3 220.3 296.0 220.0C299.7 219.7 304.3 219.2 306.0 219.0" fill="none" stroke="#a4a4a4" stroke-width="1.8" stroke-linejoin="round" stroke-linecap="round" filter="url(#c1)" opacity="1"/><path d="M266.0 217.0C266.0 216.0 270.3 214.8 272.0 215.0C273.7 215.2 276.0 217.0 276.0 218.0C276.0 219.0 273.7 221.2 272.0 221.0C270.3 220.8 266.0 218.0 266.0 217.0Z" fill="none" stroke="#a0a0a0" stroke-width="1.2" stroke-linejoin="round" stroke-linecap="round" filter="url(#c1)" opacity="1"/><path d="M266.0 223.0C267.5 222.2 272.5 221.5 275.0 222.0C277.5 222.5 280.5 224.5 281.0 226.0C281.5 227.5 279.8 230.2 278.0 231.0C276.2 231.8 272.0 231.7 270.0 231.0C268.0 230.3 266.7 228.3 266.0 227.0C265.3 225.7 264.5 223.8 266.0 223.0Z" fill="none" stroke="#9a9a9a" stroke-width="1.5" stroke-linejoin="round" stroke-linecap="round" filter="url(#c1)" opacity="1"/><path d="M285.0 222.0C285.5 223.0 287.7 226.2 288.0 228.0C288.3 229.8 287.2 232.2 287.0 233.0" fill="none" stroke="#b8b8b8" stroke-width="2.0" stroke-linejoin="round" stroke-linecap="round" filter="url(#c1)" opacity="1"/><path d="M296.0 226.0C296.9 223.6 299.7 222.2 302.0 221.5C304.3 220.8 307.9 220.9 310.0 222.0C312.1 223.1 314.2 225.7 314.5 228.0C314.8 230.3 313.2 233.5 312.0 236.0C310.8 238.5 308.2 239.7 307.0 243.0C305.8 246.3 305.3 251.5 304.5 256.0C303.7 260.5 302.8 266.2 302.0 270.0C301.2 273.8 300.8 279.0 300.0 279.0C299.2 279.0 297.8 273.8 297.5 270.0C297.2 266.2 298.0 260.2 298.5 256.0C299.0 251.8 300.8 248.3 300.5 245.0C300.2 241.7 297.2 239.2 296.5 236.0C295.8 232.8 295.1 228.4 296.0 226.0Z" fill="none" stroke="#b4b4b4" stroke-width="1.9" stroke-linejoin="round" stroke-linecap="round" filter="url(#c1)" opacity="1"/><path d="M304.0 222.0C305.2 221.3 309.2 219.3 311.0 218.0C312.8 216.7 314.3 214.7 315.0 214.0" fill="none" stroke="#b0b0b0" stroke-width="2.0" stroke-linejoin="round" stroke-linecap="round" filter="url(#c1)" opacity="1"/><path d="M236.0 262.0C237.1 258.8 238.7 260.9 241.0 260.5C243.3 260.1 247.2 259.9 250.0 259.8C252.8 259.7 255.3 259.4 258.0 260.0C260.7 260.6 264.5 261.5 266.0 263.5C267.5 265.5 266.9 269.2 267.0 272.0C267.1 274.8 265.9 277.5 266.5 280.0C267.1 282.5 270.0 283.8 270.5 287.0C271.0 290.2 270.9 296.2 269.5 299.0C268.1 301.8 264.6 303.6 262.0 303.5C259.4 303.4 256.7 298.8 254.0 298.5C251.3 298.2 247.8 300.2 246.0 301.5C244.2 302.8 242.5 305.9 243.5 306.0C244.5 306.1 248.9 302.2 252.0 302.0C255.1 301.8 259.8 303.5 262.0 305.0C264.2 306.5 265.5 308.2 265.5 311.0C265.5 313.8 263.2 318.7 262.0 322.0C260.8 325.3 259.0 328.5 258.0 331.0C257.0 333.5 258.0 336.0 256.0 337.0C254.0 338.0 248.0 338.2 246.0 337.0C244.0 335.8 245.0 333.2 244.0 330.0C243.0 326.8 241.3 320.2 240.0 318.0C238.7 315.8 236.7 320.0 236.0 317.0C235.3 314.0 236.2 306.2 236.0 300.0C235.8 293.8 234.5 286.3 234.5 280.0C234.5 273.7 234.9 265.2 236.0 262.0Z" fill="#000" filter="url(#c1)"/><path d="M230.0 243.0C230.2 241.3 231.3 240.5 232.0 242.0C232.7 243.5 233.4 248.7 234.0 252.0C234.6 255.3 235.7 260.3 235.5 262.0C235.3 263.7 233.8 263.7 233.0 262.0C232.2 260.3 231.5 255.2 231.0 252.0C230.5 248.8 229.8 244.7 230.0 243.0Z" fill="#080808" filter="url(#c1)"/><path d="M243.5 308.0C243.9 307.1 244.6 303.9 246.0 302.5C247.4 301.1 249.8 299.9 252.0 299.8C254.2 299.7 256.8 300.9 259.0 302.0C261.2 303.1 264.0 305.8 265.0 306.5" fill="none" stroke="#8a8a8a" stroke-width="1.5" stroke-linejoin="round" stroke-linecap="round" filter="url(#c1)" opacity="1"/><path d="M232 301 L233.5 304" fill="none" stroke="#7c7c7c" stroke-width="1.6" stroke-linejoin="round" stroke-linecap="round" filter="url(#c1)" opacity="1"/><path d="M272 300 L273.5 303" fill="none" stroke="#7c7c7c" stroke-width="1.6" stroke-linejoin="round" stroke-linecap="round" filter="url(#c1)" opacity="1"/><path d="M215.0 267.0C215.7 267.5 217.8 269.0 219.0 270.0C220.2 271.0 221.5 272.5 222.0 273.0" fill="none" stroke="#777" stroke-width="0.9" stroke-linejoin="round" stroke-linecap="round" filter="url(#c1)" opacity="1"/><rect x="187.0" y="245.5" width="1" height="1" fill="#ddd"/><rect x="191.0" y="244.7" width="1" height="1" fill="#ddd"/><rect x="195.0" y="244.0" width="1" height="1" fill="#ddd"/><rect x="199.0" y="243.2" width="1" height="1" fill="#ddd"/><rect x="220.0" y="239.0" width="1" height="1" fill="#ddd"/><rect x="272.0" y="222.0" width="1" height="1" fill="#ddd"/><rect x="275.5" y="223.0" width="1" height="1" fill="#ddd"/><rect x="289.0" y="226.0" width="1" height="1" fill="#ddd"/><rect x="297.5" y="227.0" width="1" height="1" fill="#ddd"/><rect x="301.5" y="228.0" width="1" height="1" fill="#ddd"/><rect x="305.5" y="229.0" width="1" height="1" fill="#ddd"/></g><rect x="118" y="117" width="235" height="1" fill="#ff0000"/><rect x="235" y="19" width="1" height="196" fill="#80ff80"/></svg>
<div style="left:236px;top:103px;width:13px;height:19px;background:#000;"></div>
<div style="left:235px;top:318px;width:14px;height:19px;background:#000;"></div>
<span class="lbl" style="left:236.5px;top:105px;font-size:17.0px;color:#ff8400;width:13px;text-align:center;">T</span>
<span class="lbl" style="left:236px;top:319px;font-size:17.0px;color:#ff8400;width:13px;text-align:center;">B</span>
<span class="lbl" style="left:7px;top:211px;font-size:17.0px;color:#ff8400;">R</span>
<span class="lbl" style="left:456px;top:211px;font-size:17.0px;color:#ff8400;width:20px;text-align:right;">L</span>
<span class="lbl" style="left:307px;top:314px;font-size:17.8px;color:#ff8400;width:168.5px;text-align:right;">125.0000</span>
<svg style="left:7px;top:103px" width="470" height="234" viewBox="0 0 470 234"><g fill="#ff0000"><rect x="0" y="0" width="9" height="1"/><rect x="0" y="5" width="6" height="1"/><rect x="0" y="9" width="9" height="1"/><rect x="0" y="14" width="6" height="1"/><rect x="0" y="19" width="9" height="1"/><rect x="0" y="23" width="6" height="1"/><rect x="0" y="28" width="9" height="1"/><rect x="0" y="33" width="6" height="1"/><rect x="0" y="37" width="9" height="1"/><rect x="0" y="42" width="6" height="1"/><rect x="0" y="47" width="9" height="1"/><rect x="0" y="51" width="6" height="1"/><rect x="0" y="56" width="9" height="1"/><rect x="0" y="61" width="6" height="1"/><rect x="0" y="66" width="9" height="1"/><rect x="0" y="70" width="6" height="1"/><rect x="0" y="75" width="9" height="1"/><rect x="0" y="80" width="6" height="1"/><rect x="0" y="84" width="9" height="1"/><rect x="0" y="89" width="6" height="1"/><rect x="0" y="94" width="9" height="1"/><rect x="0" y="98" width="6" height="1"/><rect x="0" y="103" width="9" height="1"/><rect x="0" y="108" width="6" height="1"/><rect x="0" y="112" width="9" height="1"/><rect x="0" y="117" width="6" height="1"/><rect x="0" y="122" width="9" height="1"/><rect x="0" y="126" width="6" height="1"/><rect x="0" y="131" width="9" height="1"/><rect x="0" y="136" width="6" height="1"/><rect x="0" y="140" width="9" height="1"/><rect x="0" y="145" width="6" height="1"/><rect x="0" y="150" width="9" height="1"/><rect x="0" y="154" width="6" height="1"/><rect x="0" y="159" width="9" height="1"/><rect x="0" y="164" width="6" height="1"/><rect x="0" y="168" width="9" height="1"/><rect x="0" y="173" width="6" height="1"/><rect x="0" y="178" width="9" height="1"/><rect x="0" y="183" width="6" height="1"/><rect x="0" y="187" width="9" height="1"/><rect x="0" y="192" width="6" height="1"/><rect x="0" y="197" width="9" height="1"/><rect x="0" y="201" width="6" height="1"/><rect x="0" y="206" width="9" height="1"/><rect x="0" y="211" width="6" height="1"/><rect x="0" y="215" width="9" height="1"/><rect x="0" y="220" width="6" height="1"/><rect x="0" y="225" width="9" height="1"/><rect x="0" y="229" width="6" height="1"/></g><g fill="#80ff80"><rect x="118" y="226" width="1" height="8"/><rect x="123" y="229" width="1" height="5"/><rect x="127" y="226" width="1" height="8"/><rect x="132" y="229" width="1" height="5"/><rect x="137" y="226" width="1" height="8"/><rect x="141" y="229" width="1" height="5"/><rect x="146" y="226" width="1" height="8"/><rect x="151" y="229" width="1" height="5"/><rect x="155" y="226" width="1" height="8"/><rect x="160" y="229" width="1" height="5"/><rect x="165" y="226" width="1" height="8"/><rect x="169" y="229" width="1" height="5"/><rect x="174" y="226" width="1" height="8"/><rect x="179" y="229" width="1" height="5"/><rect x="184" y="226" width="1" height="8"/><rect x="188" y="229" width="1" height="5"/><rect x="193" y="226" width="1" height="8"/><rect x="198" y="229" width="1" height="5"/><rect x="202" y="226" width="1" height="8"/><rect x="207" y="229" width="1" height="5"/><rect x="212" y="226" width="1" height="8"/><rect x="216" y="229" width="1" height="5"/><rect x="221" y="226" width="1" height="8"/><rect x="226" y="229" width="1" height="5"/><rect x="230" y="226" width="1" height="8"/><rect x="235" y="229" width="1" height="5"/><rect x="240" y="226" width="1" height="8"/><rect x="244" y="229" width="1" height="5"/><rect x="249" y="226" width="1" height="8"/><rect x="254" y="229" width="1" height="5"/><rect x="258" y="226" width="1" height="8"/><rect x="263" y="229" width="1" height="5"/><rect x="268" y="226" width="1" height="8"/><rect x="272" y="229" width="1" height="5"/><rect x="277" y="226" width="1" height="8"/><rect x="282" y="229" width="1" height="5"/><rect x="286" y="226" width="1" height="8"/><rect x="291" y="229" width="1" height="5"/><rect x="296" y="226" width="1" height="8"/><rect x="301" y="229" width="1" height="5"/><rect x="305" y="226" width="1" height="8"/><rect x="310" y="229" width="1" height="5"/><rect x="315" y="226" width="1" height="8"/><rect x="319" y="229" width="1" height="5"/><rect x="324" y="226" width="1" height="8"/><rect x="329" y="229" width="1" height="5"/><rect x="333" y="226" width="1" height="8"/><rect x="338" y="229" width="1" height="5"/><rect x="343" y="226" width="1" height="8"/><rect x="347" y="229" width="1" height="5"/><rect x="352" y="226" width="1" height="8"/></g></svg>
<div style="left:504px;top:100px;width:476px;height:240px;background:#000;border:3px solid #ff0000;"></div>
<svg style="left:507px;top:103px" width="470" height="234" viewBox="0 0 470 234"><defs><filter id="b2" x="-5%" y="-5%" width="110%" height="110%"><feGaussianBlur stdDeviation="0.7"/></filter><filter id="c2" x="-5%" y="-5%" width="110%" height="110%"><feGaussianBlur stdDeviation="0.45"/></filter><clipPath id="k2"><rect x="507" y="103" width="470" height="236"/></clipPath></defs><g transform="translate(-507,-103)" clip-path="url(#k2)"><clipPath id="m2"><path d="M781.0 236.0C781.3 234.4 783.5 232.2 785.0 232.0C786.5 231.8 788.3 234.7 790.0 234.5C791.7 234.3 793.2 231.2 795.0 231.0C796.8 230.8 799.2 233.1 801.0 233.0C802.8 232.9 804.2 230.3 806.0 230.5C807.8 230.7 810.4 232.2 812.0 234.0C813.6 235.8 814.8 238.3 815.5 241.0C816.2 243.7 816.2 247.0 816.0 250.0C815.8 253.0 815.5 256.3 814.5 259.0C813.5 261.7 811.8 264.4 810.0 266.0C808.2 267.6 805.6 268.7 804.0 268.5C802.4 268.3 801.0 266.9 800.5 265.0C800.0 263.1 801.6 259.2 801.0 257.0C800.4 254.8 798.5 253.2 797.0 252.0C795.5 250.8 793.5 250.8 792.0 249.5C790.5 248.2 789.5 245.3 788.0 244.0C786.5 242.7 784.2 242.8 783.0 241.5C781.8 240.2 780.7 237.6 781.0 236.0Z"/></clipPath><path d="M753.6 141.6C751.4 141.5 749.1 142.8 747.0 143.5C744.9 144.2 743.7 145.5 740.8 145.8C737.9 146.1 733.8 145.4 729.8 145.4C725.8 145.4 721.0 144.8 717.0 145.6C713.0 146.4 709.4 147.1 706.0 150.0C702.6 152.9 699.9 158.1 696.9 163.0C693.9 167.9 690.8 173.6 687.7 179.4C684.7 185.2 680.9 192.2 678.6 197.7C676.3 203.2 675.2 207.5 674.0 212.4C672.8 217.3 672.1 221.9 671.5 227.0C670.9 232.1 670.5 238.1 670.3 243.0C670.1 247.9 669.8 251.9 670.3 256.6C670.8 261.3 671.3 266.3 673.0 271.2C674.7 276.1 677.0 281.3 680.4 285.9C683.8 290.5 688.0 295.0 693.2 298.7C698.4 302.4 705.4 305.5 711.5 307.8C717.6 310.1 724.3 311.5 729.8 312.4C735.3 313.3 738.4 313.6 744.5 313.3C750.6 313.0 759.7 312.1 766.4 310.6C773.1 309.1 779.2 306.8 784.7 304.2C790.2 301.6 794.8 299.0 799.4 295.0C804.0 291.0 808.9 285.6 812.2 280.4C815.6 275.2 817.8 269.4 819.5 263.9C821.2 258.4 821.7 252.7 822.2 247.5C822.7 242.3 822.4 238.1 822.5 232.5C822.6 226.9 823.5 220.0 823.1 214.2C822.8 208.4 821.9 203.2 820.4 197.7C818.9 192.2 816.9 186.7 814.0 181.2C811.1 175.7 806.4 169.7 803.0 164.8C799.6 159.9 797.6 155.1 793.9 152.0C790.2 148.9 785.3 147.1 781.0 146.3C776.7 145.6 771.5 147.9 768.0 147.5C764.5 147.1 762.4 145.0 760.0 144.0C757.6 143.0 755.8 141.7 753.6 141.6Z" fill="#424242" filter="url(#b2)"/><path d="M669.0 231.5C667.8 231.8 664.1 232.4 662.0 233.5C659.9 234.6 657.7 236.1 656.5 238.0C655.3 239.9 654.9 242.9 655.0 245.0C655.1 247.1 655.8 249.4 657.0 250.5C658.2 251.6 660.5 252.1 662.0 251.5C663.5 250.9 665.3 247.8 666.0 247.0" fill="none" stroke="#454545" stroke-width="2.6" stroke-linejoin="round" stroke-linecap="round" filter="url(#c2)" opacity="1"/><path d="M823.0 231.5C824.0 231.8 827.0 232.3 829.0 233.5C831.0 234.7 833.3 236.4 835.0 238.5C836.7 240.6 838.1 243.5 839.0 246.0C839.9 248.5 841.0 252.5 840.5 253.5C840.0 254.5 837.6 252.9 836.0 252.0C834.4 251.1 832.7 249.0 831.0 248.0C829.3 247.0 826.8 246.3 826.0 246.0" fill="none" stroke="#454545" stroke-width="2.6" stroke-linejoin="round" stroke-linecap="round" filter="url(#c2)" opacity="1"/><path d="M744.0 220.0C737.3 218.3 726.2 217.0 720.0 212.0C713.8 207.0 710.5 193.2 707.0 190.0C703.5 186.8 702.2 190.3 699.0 193.0C695.8 195.7 691.0 200.7 688.0 206.0C685.0 211.3 682.5 218.5 681.0 225.0C679.5 231.5 678.8 238.8 679.0 245.0C679.2 251.2 680.5 256.5 682.5 262.0C684.5 267.5 687.4 273.4 691.0 278.0C694.6 282.6 698.7 286.7 704.0 289.5C709.3 292.3 716.2 294.4 723.0 295.0C729.8 295.6 737.5 293.5 744.5 293.0C751.5 292.5 758.2 293.6 765.0 292.0C771.8 290.4 779.5 286.9 785.0 283.5C790.5 280.1 797.2 275.1 798.0 271.5C798.8 267.9 792.7 267.2 790.0 262.0C787.3 256.8 784.5 246.0 782.0 240.0C779.5 234.0 778.7 229.0 775.0 226.0C771.3 223.0 765.2 223.0 760.0 222.0C754.8 221.0 750.7 221.7 744.0 220.0Z" fill="#4b4b4b" filter="url(#b2)"/><path d="M770.0 200.0C772.0 196.5 779.3 191.8 784.0 191.0C788.7 190.2 794.3 191.8 798.0 195.0C801.7 198.2 805.7 205.5 806.0 210.0C806.3 214.5 804.0 220.0 800.0 222.0C796.0 224.0 786.7 223.7 782.0 222.0C777.3 220.3 774.0 215.7 772.0 212.0C770.0 208.3 768.0 203.5 770.0 200.0Z" fill="#4a4a4a" filter="url(#b2)"/><ellipse cx="722" cy="158" rx="11" ry="10" fill="#4a4a4a" filter="url(#b2)"/><ellipse cx="783" cy="160" rx="11" ry="10" fill="#4a4a4a" filter="url(#b2)"/><path d="M745.0 150.0C746.7 149.0 749.5 147.8 752.0 148.0C754.5 148.2 757.7 149.3 760.0 151.0C762.3 152.7 764.3 154.8 766.0 158.0C767.7 161.2 768.3 166.3 770.0 170.0C771.7 173.7 774.2 177.7 776.0 180.0C777.8 182.3 781.0 182.3 781.0 184.0C781.0 185.7 778.2 188.5 776.0 190.0C773.8 191.5 769.0 191.0 768.0 193.0C767.0 195.0 770.0 199.3 770.0 202.0C770.0 204.7 769.3 207.8 768.0 209.0C766.7 210.2 763.3 210.5 762.0 209.0C760.7 207.5 760.7 199.3 760.0 200.0C759.3 200.7 759.7 210.3 758.0 213.0C756.3 215.7 752.3 216.2 750.0 216.0C747.7 215.8 745.2 214.7 744.0 212.0C742.8 209.3 744.2 201.0 743.0 200.0C741.8 199.0 738.4 206.3 737.0 206.0C735.6 205.7 734.8 201.5 734.5 198.0C734.2 194.5 735.2 188.8 735.0 185.0C734.8 181.2 733.0 178.8 733.5 175.0C734.0 171.2 736.6 165.5 738.0 162.0C739.4 158.5 740.8 156.0 742.0 154.0C743.2 152.0 743.3 151.0 745.0 150.0Z" fill="#050505" filter="url(#c2)"/><path d="M752.0 150.0C751.7 152.5 750.8 160.0 750.0 165.0C749.2 170.0 747.8 174.8 747.0 180.0C746.2 185.2 745.3 193.3 745.0 196.0" fill="none" stroke="#7a7a7a" stroke-width="0.9" stroke-linejoin="round" stroke-linecap="round" filter="url(#c2)" opacity="1"/><path d="M756.0 152.0C756.2 154.2 757.7 161.7 757.0 165.0C756.3 168.3 752.8 170.8 752.0 172.0" fill="none" stroke="#7a7a7a" stroke-width="0.9" stroke-linejoin="round" stroke-linecap="round" filter="url(#c2)" opacity="1"/><path d="M738.0 170.0C739.7 170.3 744.3 172.0 748.0 172.0C751.7 172.0 756.7 170.0 760.0 170.0C763.3 170.0 766.7 171.7 768.0 172.0" fill="none" stroke="#7a7a7a" stroke-width="0.9" stroke-linejoin="round" stroke-linecap="round" filter="url(#c2)" opacity="1"/><path d="M740.0 184.0C741.7 184.3 746.3 186.0 750.0 186.0C753.7 186.0 758.3 184.0 762.0 184.0C765.7 184.0 770.3 185.7 772.0 186.0" fill="none" stroke="#7a7a7a" stroke-width="0.9" stroke-linejoin="round" stroke-linecap="round" filter="url(#c2)" opacity="1"/><path d="M745.0 196.0C746.2 195.3 749.2 193.0 752.0 192.0C754.8 191.0 759.3 189.8 762.0 190.0C764.7 190.2 767.0 192.5 768.0 193.0" fill="none" stroke="#7a7a7a" stroke-width="0.9" stroke-linejoin="round" stroke-linecap="round" filter="url(#c2)" opacity="1"/><path d="M760.0 160.0C760.7 162.0 763.0 168.0 764.0 172.0C765.0 176.0 765.7 182.0 766.0 184.0" fill="none" stroke="#7a7a7a" stroke-width="0.9" stroke-linejoin="round" stroke-linecap="round" filter="url(#c2)" opacity="1"/><path d="M758 198 L759 208" fill="none" stroke="#7a7a7a" stroke-width="0.9" stroke-linejoin="round" stroke-linecap="round" filter="url(#c2)" opacity="1"/><path d="M744.0 160.0C743.7 162.0 742.5 167.7 742.0 172.0C741.5 176.3 741.2 183.7 741.0 186.0" fill="none" stroke="#7a7a7a" stroke-width="0.9" stroke-linejoin="round" stroke-linecap="round" filter="url(#c2)" opacity="1"/><path d="M748.0 149.0C749.0 148.8 752.0 147.3 754.0 147.5C756.0 147.7 759.0 149.6 760.0 150.0" fill="none" stroke="#9a9a9a" stroke-width="1.6" stroke-linejoin="round" stroke-linecap="round" filter="url(#c2)" opacity="1"/><path d="M699 171 L703.5 162.5 L707 169 L699 171Z" fill="none" stroke="#b0b0b0" stroke-width="1.3" stroke-linejoin="round" stroke-linecap="round" filter="url(#c2)" opacity="1"/><path d="M705.0 168.0C706.0 169.5 708.5 173.8 711.0 177.0C713.5 180.2 716.8 183.8 720.0 187.0C723.2 190.2 727.5 193.3 730.0 196.0C732.5 198.7 734.2 201.8 735.0 203.0" fill="none" stroke="#929292" stroke-width="1.2" stroke-linejoin="round" stroke-linecap="round" filter="url(#c2)" opacity="1"/><path d="M797 168 L802 176 L806 175 L797 168Z" fill="none" stroke="#b0b0b0" stroke-width="1.3" stroke-linejoin="round" stroke-linecap="round" filter="url(#c2)" opacity="1"/><path d="M800.0 171.0C798.7 172.3 794.8 176.3 792.0 179.0C789.2 181.7 786.0 184.5 783.0 187.0C780.0 189.5 776.3 192.0 774.0 194.0C771.7 196.0 769.8 198.2 769.0 199.0" fill="none" stroke="#929292" stroke-width="1.2" stroke-linejoin="round" stroke-linecap="round" filter="url(#c2)" opacity="1"/><path d="M711.0 177.0C710.0 178.5 707.3 183.3 705.0 186.0C702.7 188.7 699.8 189.7 697.0 193.0C694.2 196.3 690.9 201.2 688.5 206.0C686.1 210.8 683.5 219.3 682.5 222.0" fill="none" stroke="#a6a6a6" stroke-width="1.5" stroke-linejoin="round" stroke-linecap="round" filter="url(#c2)" opacity="1"/><path d="M682.5 222.0C681.9 224.3 679.8 231.3 679.0 236.0C678.2 240.7 677.3 245.3 677.5 250.0C677.7 254.7 678.3 259.2 680.0 264.0C681.7 268.8 684.0 274.2 687.7 278.6C691.4 283.0 696.6 287.4 702.4 290.4C708.2 293.4 715.5 295.2 722.5 296.4C729.5 297.6 737.5 298.1 744.5 297.6C751.5 297.1 757.9 295.5 764.6 293.5C771.3 291.5 778.9 288.9 784.7 285.4C790.5 281.9 795.5 276.7 799.4 272.5C803.3 268.3 806.6 262.1 808.0 260.0" fill="none" stroke="#a4a4a4" stroke-width="4.6" stroke-linejoin="round" stroke-linecap="round" filter="url(#c2)" opacity="1"/><path d="M682.5 222.0C681.9 224.3 679.8 231.3 679.0 236.0C678.2 240.7 677.3 245.3 677.5 250.0C677.7 254.7 678.3 259.2 680.0 264.0C681.7 268.8 684.0 274.2 687.7 278.6C691.4 283.0 696.6 287.4 702.4 290.4C708.2 293.4 715.5 295.2 722.5 296.4C729.5 297.6 737.5 298.1 744.5 297.6C751.5 297.1 757.9 295.5 764.6 293.5C771.3 291.5 778.9 288.9 784.7 285.4C790.5 281.9 795.5 276.7 799.4 272.5C803.3 268.3 806.6 262.1 808.0 260.0" fill="none" stroke="#848484" stroke-width="1.6" stroke-linejoin="round" stroke-linecap="round" filter="url(#c2)" opacity="1"/><path d="M738.0 292.0C739.1 291.0 742.3 286.1 744.5 286.0C746.7 285.9 749.9 290.6 751.0 291.5" fill="none" stroke="#a0a0a0" stroke-width="1.6" stroke-linejoin="round" stroke-linecap="round" filter="url(#c2)" opacity="1"/><path d="M771.0 196.0C772.5 195.3 777.0 192.0 780.0 192.0C783.0 192.0 786.2 194.2 789.0 196.0C791.8 197.8 794.7 200.3 797.0 203.0C799.3 205.7 801.0 209.3 803.0 212.0C805.0 214.7 807.2 218.2 809.0 219.0C810.8 219.8 812.8 218.8 814.0 217.0C815.2 215.2 816.3 211.0 816.5 208.0C816.7 205.0 815.2 200.5 815.0 199.0" fill="none" stroke="#a8a8a8" stroke-width="1.6" stroke-linejoin="round" stroke-linecap="round" filter="url(#c2)" opacity="1"/><path d="M791.0 185.0C792.0 186.7 795.0 191.3 797.0 195.0C799.0 198.7 801.0 203.0 803.0 207.0C805.0 211.0 808.0 217.0 809.0 219.0" fill="none" stroke="#9e9e9e" stroke-width="1.3" stroke-linejoin="round" stroke-linecap="round" filter="url(#c2)" opacity="1"/><path d="M816.5 208.0C816.4 210.3 816.9 218.3 816.0 222.0C815.1 225.7 813.2 229.3 811.0 230.0C808.8 230.7 804.3 226.7 803.0 226.0" fill="none" stroke="#a8a8a8" stroke-width="2.2" stroke-linejoin="round" stroke-linecap="round" filter="url(#c2)" opacity="1"/><path d="M762.0 222.0C763.3 223.0 767.0 226.5 770.0 228.0C773.0 229.5 776.7 230.8 780.0 231.0C783.3 231.2 786.7 230.2 790.0 229.0C793.3 227.8 797.3 224.5 800.0 224.0C802.7 223.5 805.0 225.7 806.0 226.0" fill="none" stroke="#b4b4b4" stroke-width="2.6" stroke-linejoin="round" stroke-linecap="round" filter="url(#c2)" opacity="1"/><path d="M781.0 236.0C781.3 234.4 783.5 232.2 785.0 232.0C786.5 231.8 788.3 234.7 790.0 234.5C791.7 234.3 793.2 231.2 795.0 231.0C796.8 230.8 799.2 233.1 801.0 233.0C802.8 232.9 804.2 230.3 806.0 230.5C807.8 230.7 810.4 232.2 812.0 234.0C813.6 235.8 814.8 238.3 815.5 241.0C816.2 243.7 816.2 247.0 816.0 250.0C815.8 253.0 815.5 256.3 814.5 259.0C813.5 261.7 811.8 264.4 810.0 266.0C808.2 267.6 805.6 268.7 804.0 268.5C802.4 268.3 801.0 266.9 800.5 265.0C800.0 263.1 801.6 259.2 801.0 257.0C800.4 254.8 798.5 253.2 797.0 252.0C795.5 250.8 793.5 250.8 792.0 249.5C790.5 248.2 789.5 245.3 788.0 244.0C786.5 242.7 784.2 242.8 783.0 241.5C781.8 240.2 780.7 237.6 781.0 236.0Z" fill="#8a8a8a" filter="url(#c2)"/><path d="M783.5 237.0C783.8 236.1 785.8 234.5 787.0 234.5C788.2 234.5 789.5 237.2 791.0 237.0C792.5 236.8 794.3 233.8 796.0 233.5C797.7 233.2 799.3 235.6 801.0 235.5C802.7 235.4 804.3 232.9 806.0 233.0C807.7 233.1 809.8 234.3 811.0 236.0C812.2 237.7 813.0 240.5 813.5 243.0C814.0 245.5 814.2 248.5 814.0 251.0C813.8 253.5 813.4 255.8 812.5 258.0C811.6 260.2 809.9 262.7 808.5 264.0C807.1 265.3 805.0 266.3 804.0 266.0C803.0 265.7 802.7 263.8 802.5 262.0C802.3 260.2 803.6 257.0 803.0 255.0C802.4 253.0 800.6 251.2 799.0 250.0C797.4 248.8 795.1 248.8 793.5 247.5C791.9 246.2 790.9 243.8 789.5 242.5C788.1 241.2 786.0 240.9 785.0 240.0C784.0 239.1 783.2 237.9 783.5 237.0Z" fill="#0e0e0e" filter="url(#c2)"/><rect x="794.1" y="239.5" width="2.0" height="0.9" fill="#9a9a9a" opacity="0.66" clip-path="url(#m2)"/><rect x="795.2" y="236.7" width="1.8" height="0.8" fill="#9a9a9a" opacity="0.62" clip-path="url(#m2)"/><rect x="787.0" y="237.7" width="1.7" height="1.6" fill="#9a9a9a" opacity="0.50" clip-path="url(#m2)"/><rect x="791.3" y="253.8" width="2.5" height="1.4" fill="#9a9a9a" opacity="0.61" clip-path="url(#m2)"/><rect x="812.3" y="236.4" width="2.4" height="1.1" fill="#9a9a9a" opacity="0.51" clip-path="url(#m2)"/><rect x="788.3" y="244.3" width="2.3" height="1.0" fill="#9a9a9a" opacity="0.68" clip-path="url(#m2)"/><rect x="802.9" y="246.2" width="1.9" height="0.9" fill="#9a9a9a" opacity="0.47" clip-path="url(#m2)"/><rect x="790.8" y="255.4" width="1.7" height="1.1" fill="#9a9a9a" opacity="0.68" clip-path="url(#m2)"/><rect x="797.7" y="244.0" width="2.3" height="1.5" fill="#9a9a9a" opacity="0.55" clip-path="url(#m2)"/><rect x="801.1" y="250.8" width="2.4" height="1.5" fill="#9a9a9a" opacity="0.57" clip-path="url(#m2)"/><rect x="812.4" y="238.5" width="1.7" height="1.6" fill="#9a9a9a" opacity="0.51" clip-path="url(#m2)"/><rect x="798.7" y="236.2" width="2.1" height="1.6" fill="#9a9a9a" opacity="0.68" clip-path="url(#m2)"/><rect x="809.5" y="244.4" width="2.1" height="1.4" fill="#9a9a9a" opacity="0.68" clip-path="url(#m2)"/><rect x="797.8" y="260.2" width="2.5" height="1.3" fill="#9a9a9a" opacity="0.72" clip-path="url(#m2)"/><rect x="786.7" y="256.0" width="2.0" height="1.8" fill="#9a9a9a" opacity="0.78" clip-path="url(#m2)"/><rect x="793.0" y="246.6" width="2.1" height="0.8" fill="#9a9a9a" opacity="0.63" clip-path="url(#m2)"/><rect x="789.7" y="238.5" width="1.1" height="1.6" fill="#9a9a9a" opacity="0.50" clip-path="url(#m2)"/><rect x="791.9" y="246.7" width="2.4" height="0.9" fill="#9a9a9a" opacity="0.63" clip-path="url(#m2)"/><rect x="800.4" y="261.5" width="2.3" height="1.7" fill="#9a9a9a" opacity="0.56" clip-path="url(#m2)"/><rect x="796.6" y="245.8" width="2.4" height="1.8" fill="#9a9a9a" opacity="0.51" clip-path="url(#m2)"/><rect x="789.9" y="242.0" width="1.4" height="1.3" fill="#9a9a9a" opacity="0.69" clip-path="url(#m2)"/><rect x="792.4" y="235.1" width="1.7" height="1.2" fill="#9a9a9a" opacity="0.68" clip-path="url(#m2)"/><rect x="811.7" y="255.7" width="1.8" height="1.4" fill="#9a9a9a" opacity="0.72" clip-path="url(#m2)"/><rect x="786.5" y="262.0" width="2.2" height="1.7" fill="#9a9a9a" opacity="0.77" clip-path="url(#m2)"/><rect x="796.0" y="247.0" width="1.2" height="1.4" fill="#9a9a9a" opacity="0.47" clip-path="url(#m2)"/><rect x="786.9" y="241.3" width="1.3" height="1.1" fill="#9a9a9a" opacity="0.47" clip-path="url(#m2)"/><rect x="785.0" y="239.5" width="1.2" height="1.2" fill="#9a9a9a" opacity="0.46" clip-path="url(#m2)"/><rect x="809.5" y="253.4" width="1.2" height="1.1" fill="#9a9a9a" opacity="0.59" clip-path="url(#m2)"/><rect x="795.2" y="238.7" width="2.4" height="1.8" fill="#9a9a9a" opacity="0.64" clip-path="url(#m2)"/><rect x="798.5" y="237.6" width="1.2" height="1.1" fill="#9a9a9a" opacity="0.56" clip-path="url(#m2)"/><rect x="808.2" y="239.8" width="1.0" height="1.8" fill="#9a9a9a" opacity="0.66" clip-path="url(#m2)"/><rect x="789.1" y="251.3" width="1.0" height="1.3" fill="#9a9a9a" opacity="0.84" clip-path="url(#m2)"/><rect x="809.2" y="255.9" width="1.4" height="1.2" fill="#9a9a9a" opacity="0.52" clip-path="url(#m2)"/><rect x="806.6" y="251.0" width="2.2" height="1.1" fill="#9a9a9a" opacity="0.54" clip-path="url(#m2)"/><rect x="807.7" y="264.5" width="2.4" height="1.6" fill="#9a9a9a" opacity="0.78" clip-path="url(#m2)"/><rect x="805.7" y="241.8" width="1.8" height="1.2" fill="#9a9a9a" opacity="0.46" clip-path="url(#m2)"/><rect x="785.8" y="243.4" width="1.4" height="1.5" fill="#9a9a9a" opacity="0.83" clip-path="url(#m2)"/><rect x="797.5" y="263.1" width="2.6" height="1.8" fill="#9a9a9a" opacity="0.60" clip-path="url(#m2)"/><rect x="791.2" y="241.8" width="1.3" height="1.0" fill="#9a9a9a" opacity="0.70" clip-path="url(#m2)"/><rect x="810.2" y="260.2" width="1.8" height="1.5" fill="#9a9a9a" opacity="0.77" clip-path="url(#m2)"/><rect x="787.4" y="254.8" width="2.5" height="1.6" fill="#9a9a9a" opacity="0.75" clip-path="url(#m2)"/><rect x="798.4" y="240.4" width="2.3" height="1.1" fill="#9a9a9a" opacity="0.77" clip-path="url(#m2)"/><rect x="812.2" y="246.9" width="1.6" height="1.7" fill="#9a9a9a" opacity="0.74" clip-path="url(#m2)"/><rect x="789.8" y="238.8" width="1.2" height="1.7" fill="#9a9a9a" opacity="0.77" clip-path="url(#m2)"/><rect x="789.1" y="259.8" width="2.6" height="1.5" fill="#9a9a9a" opacity="0.59" clip-path="url(#m2)"/><rect x="800.4" y="238.9" width="1.0" height="1.8" fill="#9a9a9a" opacity="0.71" clip-path="url(#m2)"/><path d="M791.0 225.0C791.7 223.7 794.0 222.3 795.0 223.0C796.0 223.7 797.2 227.2 797.0 229.0C796.8 230.8 795.0 233.7 794.0 234.0C793.0 234.3 791.5 232.5 791.0 231.0C790.5 229.5 790.3 226.3 791.0 225.0Z" fill="#0a0a0a" filter="url(#c2)"/><path d="M677.5 236 L679 235 L679.5 242 L678 242Z" fill="#111" filter="url(#c2)"/><path d="M655.5 283.5A127 127 0 0 0 832.5 283.5" fill="none" stroke="#6e6e6e" stroke-width="3.4" stroke-linecap="round" filter="url(#c2)"/><path d="M626.0 253.0C628.3 252.8 635.7 250.0 640.0 252.0C644.3 254.0 648.5 260.3 652.0 265.0C655.5 269.7 659.5 277.5 661.0 280.0" fill="none" stroke="#2c2c2c" stroke-width="0.7" stroke-linejoin="round" stroke-linecap="round" filter="url(#c2)" opacity="1"/><path d="M858.0 252.0C855.8 252.8 849.3 255.3 845.0 257.0C840.7 258.7 835.8 259.0 832.0 262.0C828.2 265.0 825.3 270.3 822.0 275.0C818.7 279.7 816.5 285.3 812.0 290.0C807.5 294.7 801.2 299.8 795.0 303.0C788.8 306.2 778.3 308.0 775.0 309.0" fill="none" stroke="#2c2c2c" stroke-width="0.7" stroke-linejoin="round" stroke-linecap="round" filter="url(#c2)" opacity="1"/><rect x="762.0" y="209.0" width="1" height="1" fill="#ddd"/><rect x="761.0" y="211.5" width="1" height="1" fill="#ddd"/><rect x="760.0" y="214.0" width="1" height="1" fill="#ddd"/><rect x="759.0" y="216.5" width="1" height="1" fill="#ddd"/><rect x="758.0" y="219.0" width="1" height="1" fill="#ddd"/><rect x="757.0" y="224.5" width="1" height="1" fill="#ddd"/></g><rect x="118" y="117" width="235" height="1" fill="#ff8400"/><rect x="235" y="19" width="1" height="196" fill="#80ff80"/></svg>
<div style="left:735px;top:318px;width:14px;height:19px;background:#000;"></div>
<span class="lbl" style="left:736.5px;top:105px;font-size:17.0px;color:#ff0000;width:13px;text-align:center;">A</span>
<span class="lbl" style="left:736px;top:319px;font-size:17.0px;color:#ff0000;width:13px;text-align:center;">P</span>
<span class="lbl" style="left:507px;top:211px;font-size:17.0px;color:#ff0000;">R</span>
<span class="lbl" style="left:956px;top:211px;font-size:17.0px;color:#ff0000;width:20px;text-align:right;">L</span>
<span class="lbl" style="left:807px;top:314px;font-size:17.8px;color:#ff0000;width:168.5px;text-align:right;">125</span>
<svg style="left:507px;top:103px" width="470" height="234" viewBox="0 0 470 234"><g fill="#ff8400"><rect x="0" y="0" width="9" height="1"/><rect x="0" y="5" width="6" height="1"/><rect x="0" y="9" width="9" height="1"/><rect x="0" y="14" width="6" height="1"/><rect x="0" y="19" width="9" height="1"/><rect x="0" y="23" width="6" height="1"/><rect x="0" y="28" width="9" height="1"/><rect x="0" y="33" width="6" height="1"/><rect x="0" y="37" width="9" height="1"/><rect x="0" y="42" width="6" height="1"/><rect x="0" y="47" width="9" height="1"/><rect x="0" y="51" width="6" height="1"/><rect x="0" y="56" width="9" height="1"/><rect x="0" y="61" width="6" height="1"/><rect x="0" y="66" width="9" height="1"/><rect x="0" y="70" width="6" height="1"/><rect x="0" y="75" width="9" height="1"/><rect x="0" y="80" width="6" height="1"/><rect x="0" y="84" width="9" height="1"/><rect x="0" y="89" width="6" height="1"/><rect x="0" y="94" width="9" height="1"/><rect x="0" y="98" width="6" height="1"/><rect x="0" y="103" width="9" height="1"/><rect x="0" y="108" width="6" height="1"/><rect x="0" y="112" width="9" height="1"/><rect x="0" y="117" width="6" height="1"/><rect x="0" y="122" width="9" height="1"/><rect x="0" y="126" width="6" height="1"/><rect x="0" y="131" width="9" height="1"/><rect x="0" y="136" width="6" height="1"/><rect x="0" y="140" width="9" height="1"/><rect x="0" y="145" width="6" height="1"/><rect x="0" y="150" width="9" height="1"/><rect x="0" y="154" width="6" height="1"/><rect x="0" y="159" width="9" height="1"/><rect x="0" y="164" width="6" height="1"/><rect x="0" y="168" width="9" height="1"/><rect x="0" y="173" width="6" height="1"/><rect x="0" y="178" width="9" height="1"/><rect x="0" y="183" width="6" height="1"/><rect x="0" y="187" width="9" height="1"/><rect x="0" y="192" width="6" height="1"/><rect x="0" y="197" width="9" height="1"/><rect x="0" y="201" width="6" height="1"/><rect x="0" y="206" width="9" height="1"/><rect x="0" y="211" width="6" height="1"/><rect x="0" y="215" width="9" height="1"/><rect x="0" y="220" width="6" height="1"/><rect x="0" y="225" width="9" height="1"/><rect x="0" y="229" width="6" height="1"/></g><g fill="#80ff80"><rect x="118" y="226" width="1" height="8"/><rect x="123" y="229" width="1" height="5"/><rect x="127" y="226" width="1" height="8"/><rect x="132" y="229" width="1" height="5"/><rect x="137" y="226" width="1" height="8"/><rect x="141" y="229" width="1" height="5"/><rect x="146" y="226" width="1" height="8"/><rect x="151" y="229" width="1" height="5"/><rect x="155" y="226" width="1" height="8"/><rect x="160" y="229" width="1" height="5"/><rect x="165" y="226" width="1" height="8"/><rect x="169" y="229" width="1" height="5"/><rect x="174" y="226" width="1" height="8"/><rect x="179" y="229" width="1" height="5"/><rect x="184" y="226" width="1" height="8"/><rect x="188" y="229" width="1" height="5"/><rect x="193" y="226" width="1" height="8"/><rect x="198" y="229" width="1" height="5"/><rect x="202" y="226" width="1" height="8"/><rect x="207" y="229" width="1" height="5"/><rect x="212" y="226" width="1" height="8"/><rect x="216" y="229" width="1" height="5"/><rect x="221" y="226" width="1" height="8"/><rect x="226" y="229" width="1" height="5"/><rect x="230" y="226" width="1" height="8"/><rect x="235" y="229" width="1" height="5"/><rect x="240" y="226" width="1" height="8"/><rect x="244" y="229" width="1" height="5"/><rect x="249" y="226" width="1" height="8"/><rect x="254" y="229" width="1" height="5"/><rect x="258" y="226" width="1" height="8"/><rect x="263" y="229" width="1" height="5"/><rect x="268" y="226" width="1" height="8"/><rect x="272" y="229" width="1" height="5"/><rect x="277" y="226" width="1" height="8"/><rect x="282" y="229" width="1" height="5"/><rect x="286" y="226" width="1" height="8"/><rect x="291" y="229" width="1" height="5"/><rect x="296" y="226" width="1" height="8"/><rect x="301" y="229" width="1" height="5"/><rect x="305" y="226" width="1" height="8"/><rect x="310" y="229" width="1" height="5"/><rect x="315" y="226" width="1" height="8"/><rect x="319" y="229" width="1" height="5"/><rect x="324" y="226" width="1" height="8"/><rect x="329" y="229" width="1" height="5"/><rect x="333" y="226" width="1" height="8"/><rect x="338" y="229" width="1" height="5"/><rect x="343" y="226" width="1" height="8"/><rect x="347" y="229" width="1" height="5"/><rect x="352" y="226" width="1" height="8"/></g></svg>
<div style="left:509px;top:313px;width:48px;height:17px;background:#000;"></div>
<span class="lbl" style="left:509px;top:314px;font-size:17.8px;color:#ff0000;">927.3</span>
<div style="left:4px;top:347px;width:476px;height:241px;background:#000;border:3px solid #80ff80;"></div>
<svg style="left:7px;top:350px" width="470" height="235" viewBox="0 0 470 235"><defs><filter id="b3" x="-5%" y="-5%" width="110%" height="110%"><feGaussianBlur stdDeviation="0.7"/></filter><filter id="c3" x="-5%" y="-5%" width="110%" height="110%"><feGaussianBlur stdDeviation="0.45"/></filter><clipPath id="k3"><rect x="7" y="350" width="470" height="236"/></clipPath></defs><g transform="translate(-7,-350)" clip-path="url(#k3)"><path d="M236.0 346.0C227.6 346.0 208.7 346.7 199.7 349.0C190.7 351.3 187.0 355.6 181.8 359.8C176.7 364.0 172.6 369.2 168.8 374.4C165.0 379.5 161.7 385.3 159.0 390.7C156.3 396.1 154.1 401.5 152.5 406.9C150.9 412.3 150.0 417.5 149.3 423.2C148.6 428.9 148.5 435.2 148.5 441.0C148.5 446.8 148.9 453.2 149.5 458.0C150.1 462.8 151.4 465.5 152.1 470.0C152.8 474.5 153.0 479.2 153.5 485.0C154.0 490.8 154.4 497.6 155.0 505.0C155.6 512.4 157.2 521.9 157.3 529.4C157.4 536.9 156.7 543.9 155.5 550.0C154.3 556.1 151.9 561.0 150.0 566.0C148.1 571.0 145.5 575.3 144.0 580.0C142.5 584.7 121.3 591.7 141.0 594.0C160.7 596.3 241.8 595.6 262.0 594.0C282.2 592.4 262.0 587.4 262.3 584.3C262.6 581.2 262.5 577.8 263.7 575.4C264.9 573.0 266.7 570.9 269.7 570.2C272.7 569.5 277.9 570.1 281.6 571.0C285.3 571.9 288.5 574.2 292.0 575.4C295.5 576.6 299.3 578.1 302.5 578.4C305.7 578.6 308.9 578.4 311.4 576.9C313.9 575.4 315.6 573.6 317.4 569.4C319.1 565.2 320.9 556.2 321.9 551.5C322.9 546.8 323.8 543.5 323.6 541.0C323.5 538.5 322.2 538.3 321.0 536.6C319.8 534.9 317.1 532.6 316.5 531.0C315.9 529.4 316.9 528.3 317.5 527.0C318.1 525.7 320.4 525.3 320.4 523.2C320.4 521.1 317.1 516.7 317.4 514.3C317.7 511.9 320.5 510.6 322.0 509.0C323.5 507.4 325.8 506.1 326.3 504.5C326.8 502.9 326.3 500.8 324.9 499.4C323.5 498.0 319.6 497.7 318.0 496.0C316.4 494.3 315.6 492.0 315.2 489.0C314.8 486.0 315.2 481.5 315.5 478.0C315.8 474.5 316.1 470.8 317.0 468.0C317.9 465.2 319.9 463.2 321.0 461.0C322.1 458.8 322.4 457.2 323.3 455.0C324.2 452.8 326.1 450.7 326.5 447.6C326.9 444.5 326.1 440.8 325.7 436.2C325.3 431.6 325.1 425.3 324.1 419.9C323.2 414.5 322.0 408.6 320.0 403.7C318.0 398.8 315.4 395.0 311.9 390.7C308.4 386.4 303.8 381.7 298.9 377.6C294.0 373.5 288.0 369.6 282.6 366.3C277.2 363.1 271.7 361.0 266.3 358.1C260.9 355.2 255.1 351.0 250.0 349.0C244.9 347.0 244.4 346.0 236.0 346.0Z" fill="#414141" filter="url(#b3)"/><path d="M156.0 470.0C162.0 467.7 177.7 475.3 190.0 476.0C202.3 476.7 218.0 475.7 230.0 474.0C242.0 472.3 250.3 468.0 262.0 466.0C273.7 464.0 290.7 462.0 300.0 462.0C309.3 462.0 315.3 461.3 318.0 466.0C320.7 470.7 314.7 483.7 316.0 490.0C317.3 496.3 325.7 500.0 326.0 504.0C326.3 508.0 318.5 508.0 318.0 514.0C317.5 520.0 323.2 530.8 323.0 540.0C322.8 549.2 320.3 562.7 317.0 569.0C313.7 575.3 308.8 577.7 303.0 578.0C297.2 578.3 288.5 571.5 282.0 571.0C275.5 570.5 267.3 570.8 264.0 575.0C260.7 579.2 282.5 592.5 262.0 596.0C241.5 599.5 159.7 601.0 141.0 596.0C122.3 591.0 147.3 577.0 150.0 566.0C152.7 555.0 156.3 542.7 157.0 530.0C157.7 517.3 154.2 500.0 154.0 490.0C153.8 480.0 150.0 472.3 156.0 470.0Z" fill="#4b4b4b" filter="url(#b3)"/><rect x="138" y="346" width="5.5" height="112" fill="#4a4a4a" filter="url(#c3)"/><path d="M141.0 455.0C141.0 457.5 141.5 465.3 141.0 470.0C140.5 474.7 139.7 479.0 138.0 483.0C136.3 487.0 133.3 491.2 131.0 494.0C128.7 496.8 125.2 499.0 124.0 500.0" fill="none" stroke="#4a4a4a" stroke-width="6.0" stroke-linejoin="round" stroke-linecap="round" filter="url(#c3)" opacity="1"/><path d="M148.0 352.0C148.5 354.2 150.3 360.3 151.0 365.0C151.7 369.7 152.3 375.5 152.0 380.0C151.7 384.5 149.3 388.7 149.0 392.0C148.7 395.3 149.8 398.7 150.0 400.0" fill="none" stroke="#333" stroke-width="0.7" stroke-linejoin="round" stroke-linecap="round" filter="url(#c3)" opacity="1"/><path d="M140.0 500.0C139.0 503.3 136.0 513.3 134.0 520.0C132.0 526.7 128.7 533.3 128.0 540.0C127.3 546.7 128.3 554.2 130.0 560.0C131.7 565.8 136.7 572.5 138.0 575.0" fill="none" stroke="#2e2e2e" stroke-width="0.7" stroke-linejoin="round" stroke-linecap="round" filter="url(#c3)" opacity="1"/><path d="M237.0 354.5C230.0 354.1 218.4 355.4 211.0 357.5C203.6 359.6 198.0 363.0 192.5 367.3C187.0 371.6 182.3 377.6 178.0 383.5C173.7 389.4 169.7 396.2 166.8 402.5C163.9 408.8 162.1 415.1 160.5 421.5C158.9 427.9 156.8 435.4 157.0 441.0C157.2 446.6 159.8 450.8 162.0 455.0C164.2 459.2 165.3 462.2 170.0 466.0C174.7 469.8 182.5 476.3 190.0 478.0C197.5 479.7 207.3 478.7 215.0 476.0C222.7 473.3 229.8 465.7 236.0 462.0C242.2 458.3 245.5 455.7 252.0 454.0C258.5 452.3 267.0 452.7 275.0 452.0C283.0 451.3 293.8 452.3 300.0 450.0C306.2 447.7 309.8 442.2 312.0 438.0C314.2 433.8 313.8 429.2 313.5 424.8C313.2 420.4 312.1 416.6 310.5 411.8C308.9 407.0 307.2 401.1 304.0 396.0C300.8 390.9 296.6 386.0 291.5 381.5C286.4 377.0 279.9 372.6 273.5 369.0C267.1 365.4 259.1 362.4 253.0 360.0C246.9 357.6 244.0 354.9 237.0 354.5Z" fill="#474747" filter="url(#b3)"/><path d="M165.0 480.0C171.7 471.0 192.2 479.3 200.0 486.0C207.8 492.7 212.0 507.7 212.0 520.0C212.0 532.3 203.7 548.3 200.0 560.0C196.3 571.7 196.7 585.0 190.0 590.0C183.3 595.0 165.0 598.3 160.0 590.0C155.0 581.7 159.2 558.3 160.0 540.0C160.8 521.7 158.3 489.0 165.0 480.0Z" fill="#444" filter="url(#b3)"/><path d="M168.5 468.0C167.2 465.9 162.8 460.2 160.7 455.7C158.5 451.2 155.9 446.7 155.6 441.0C155.2 435.3 157.0 428.0 158.6 421.5C160.2 415.0 162.0 408.5 165.0 402.0C168.0 395.5 172.1 388.5 176.4 382.5C180.7 376.5 185.3 370.4 191.0 366.0C196.7 361.6 202.8 358.2 210.5 356.0C218.2 353.8 229.8 352.4 237.0 352.8C244.2 353.2 247.3 356.2 253.6 358.6C259.9 361.0 268.1 363.8 274.6 367.4C281.1 371.0 287.4 375.8 292.6 380.4C297.8 385.0 302.5 389.8 305.8 395.0C309.1 400.2 310.8 406.8 312.4 411.8C314.0 416.8 314.9 422.6 315.4 424.8" fill="none" stroke="#a2a2a2" stroke-width="4.6" stroke-linejoin="round" stroke-linecap="round" filter="url(#c3)" opacity="1"/><path d="M168.5 468.0C167.2 465.9 162.8 460.2 160.7 455.7C158.5 451.2 155.9 446.7 155.6 441.0C155.2 435.3 157.0 428.0 158.6 421.5C160.2 415.0 162.0 408.5 165.0 402.0C168.0 395.5 172.1 388.5 176.4 382.5C180.7 376.5 185.3 370.4 191.0 366.0C196.7 361.6 202.8 358.2 210.5 356.0C218.2 353.8 229.8 352.4 237.0 352.8C244.2 353.2 247.3 356.2 253.6 358.6C259.9 361.0 268.1 363.8 274.6 367.4C281.1 371.0 287.4 375.8 292.6 380.4C297.8 385.0 302.5 389.8 305.8 395.0C309.1 400.2 310.8 406.8 312.4 411.8C314.0 416.8 314.9 422.6 315.4 424.8" fill="none" stroke="#7e7e7e" stroke-width="1.7" stroke-linejoin="round" stroke-linecap="round" filter="url(#c3)" opacity="1"/><path d="M157.5 425.0C157.2 427.2 155.9 433.8 156.0 438.0C156.1 442.2 156.8 446.2 158.0 450.0C159.2 453.8 162.2 459.2 163.0 461.0" fill="none" stroke="#9a9a9a" stroke-width="6.5" stroke-linejoin="round" stroke-linecap="round" filter="url(#c3)" opacity="1"/><path d="M157.5 428.0C157.3 429.7 156.3 434.5 156.5 438.0C156.7 441.5 157.4 445.5 158.5 449.0C159.6 452.5 162.2 457.3 163.0 459.0" fill="none" stroke="#7c7c7c" stroke-width="3.0" stroke-linejoin="round" stroke-linecap="round" filter="url(#c3)" opacity="1"/><path d="M158.0 448.0C158.7 450.0 160.2 456.3 162.0 460.0C163.8 463.7 166.3 466.7 169.0 470.0C171.7 473.3 175.0 477.0 178.0 480.0C181.0 483.0 184.5 485.8 187.0 488.0C189.5 490.2 192.0 492.2 193.0 493.0" fill="none" stroke="#a2a2a2" stroke-width="5.2" stroke-linejoin="round" stroke-linecap="round" filter="url(#c3)" opacity="1"/><path d="M158.0 448.0C158.7 450.0 160.2 456.3 162.0 460.0C163.8 463.7 166.3 466.7 169.0 470.0C171.7 473.3 175.0 477.0 178.0 480.0C181.0 483.0 184.5 485.8 187.0 488.0C189.5 490.2 192.0 492.2 193.0 493.0" fill="none" stroke="#858585" stroke-width="2.0" stroke-linejoin="round" stroke-linecap="round" filter="url(#c3)" opacity="1"/><path d="M186.0 484.0C186.3 483.2 190.5 487.3 192.0 489.0C193.5 490.7 195.3 493.2 195.0 494.0C194.7 494.8 191.5 495.2 190.0 493.5C188.5 491.8 185.7 484.8 186.0 484.0Z" fill="#555" filter="url(#c3)"/><path d="M314.5 426.0C315.2 424.3 316.3 425.7 317.0 428.0C317.7 430.3 318.0 436.3 318.5 440.0C319.0 443.7 320.2 447.0 320.0 450.0C319.8 453.0 318.2 456.2 317.0 458.0C315.8 459.8 313.1 462.3 312.5 461.0C311.9 459.7 313.4 453.8 313.5 450.0C313.6 446.2 312.8 442.0 313.0 438.0C313.2 434.0 313.8 427.7 314.5 426.0Z" fill="#060606" filter="url(#c3)"/><path d="M316.0 424.0C316.8 426.0 319.5 432.0 320.5 436.0C321.5 440.0 322.2 444.3 322.0 448.0C321.8 451.7 320.8 455.3 319.5 458.0C318.2 460.7 314.9 463.0 314.0 464.0" fill="none" stroke="#9c9c9c" stroke-width="1.5" stroke-linejoin="round" stroke-linecap="round" filter="url(#c3)" opacity="1"/><path d="M258.0 456.0C258.7 454.2 263.0 452.7 266.0 452.5C269.0 452.3 274.8 453.4 276.0 455.0C277.2 456.6 275.3 460.7 273.0 462.0C270.7 463.3 264.5 464.0 262.0 463.0C259.5 462.0 257.3 457.8 258.0 456.0Z" fill="#050505" filter="url(#c3)"/><path d="M277.0 459.0C277.8 457.3 282.7 456.0 286.0 456.0C289.3 456.0 295.7 457.3 297.0 459.0C298.3 460.7 296.7 464.8 294.0 466.0C291.3 467.2 283.8 467.2 281.0 466.0C278.2 464.8 276.2 460.7 277.0 459.0Z" fill="#050505" filter="url(#c3)"/><path d="M298.0 460.0C299.0 458.4 303.7 456.5 306.0 456.5C308.3 456.5 311.7 458.4 312.0 460.0C312.3 461.6 310.0 465.0 308.0 466.0C306.0 467.0 301.7 467.0 300.0 466.0C298.3 465.0 297.0 461.6 298.0 460.0Z" fill="#050505" filter="url(#c3)"/><path d="M262.0 466.0C263.0 464.7 269.0 463.7 272.0 464.0C275.0 464.3 279.3 466.5 280.0 468.0C280.7 469.5 278.3 472.3 276.0 473.0C273.7 473.7 268.3 473.2 266.0 472.0C263.7 470.8 261.0 467.3 262.0 466.0Z" fill="#050505" filter="url(#c3)"/><path d="M283.0 468.0C284.0 467.0 292.2 468.2 296.0 468.0C299.8 467.8 304.8 466.2 306.0 467.0C307.2 467.8 305.7 471.8 303.0 473.0C300.3 474.2 293.3 474.8 290.0 474.0C286.7 473.2 282.0 469.0 283.0 468.0Z" fill="#050505" filter="url(#c3)"/><path d="M251.0 456.0C251.3 457.0 252.0 460.3 253.0 462.0C254.0 463.7 255.5 464.7 257.0 466.0C258.5 467.3 261.2 469.3 262.0 470.0" fill="none" stroke="#a0a0a0" stroke-width="1.3" stroke-linejoin="round" stroke-linecap="round" filter="url(#c3)" opacity="1"/><path d="M250.0 466.0C250.5 464.5 252.0 459.3 253.0 457.0C254.0 454.7 255.5 452.8 256.0 452.0" fill="none" stroke="#a8a8a8" stroke-width="1.0" stroke-linejoin="round" stroke-linecap="round" filter="url(#c3)" opacity="1"/><path d="M256.0 455.0C258.3 454.3 264.7 451.0 270.0 451.0C275.3 451.0 282.0 454.3 288.0 455.0C294.0 455.7 301.8 454.5 306.0 455.0C310.2 455.5 311.8 457.5 313.0 458.0" fill="none" stroke="#909090" stroke-width="1.0" stroke-linejoin="round" stroke-linecap="round" filter="url(#c3)" opacity="1"/><path d="M248.0 470.0C246.7 471.0 242.7 474.0 240.0 476.0C237.3 478.0 234.3 479.7 232.0 482.0C229.7 484.3 227.5 487.5 226.0 490.0C224.5 492.5 223.5 495.8 223.0 497.0" fill="none" stroke="#9c9c9c" stroke-width="4.2" stroke-linejoin="round" stroke-linecap="round" filter="url(#c3)" opacity="1"/><path d="M262.0 470.0C263.7 471.0 268.3 474.5 272.0 476.0C275.7 477.5 279.3 478.7 284.0 479.0C288.7 479.3 295.8 478.8 300.0 478.0C304.2 477.2 307.5 474.7 309.0 474.0" fill="none" stroke="#8c8c8c" stroke-width="1.2" stroke-linejoin="round" stroke-linecap="round" filter="url(#c3)" opacity="1"/><path d="M217.0 510.0C218.8 507.3 230.0 499.5 233.0 500.0C236.0 500.5 236.8 510.3 235.0 513.0C233.2 515.7 225.0 516.5 222.0 516.0C219.0 515.5 215.2 512.7 217.0 510.0Z" fill="#6c6c6c" filter="url(#c3)"/><path d="M217.0 510.0C218.8 507.3 230.0 499.5 233.0 500.0C236.0 500.5 236.8 510.3 235.0 513.0C233.2 515.7 225.0 516.5 222.0 516.0C219.0 515.5 215.2 512.7 217.0 510.0Z" fill="none" stroke="#b6b6b6" stroke-width="1.2" stroke-linejoin="round" stroke-linecap="round" filter="url(#c3)" opacity="1"/><path d="M205.0 528.0C207.2 525.3 215.3 521.0 220.0 520.0C224.7 519.0 231.2 520.3 233.0 522.0C234.8 523.7 233.7 528.2 231.0 530.0C228.3 531.8 221.0 532.0 217.0 533.0C213.0 534.0 209.0 536.8 207.0 536.0C205.0 535.2 202.8 530.7 205.0 528.0Z" fill="#6c6c6c" filter="url(#c3)"/><path d="M205.0 528.0C207.2 525.3 215.3 521.0 220.0 520.0C224.7 519.0 231.2 520.3 233.0 522.0C234.8 523.7 233.7 528.2 231.0 530.0C228.3 531.8 221.0 532.0 217.0 533.0C213.0 534.0 209.0 536.8 207.0 536.0C205.0 535.2 202.8 530.7 205.0 528.0Z" fill="none" stroke="#b6b6b6" stroke-width="1.2" stroke-linejoin="round" stroke-linecap="round" filter="url(#c3)" opacity="1"/><path d="M202.0 541.0C203.5 539.2 209.5 535.8 212.0 536.0C214.5 536.2 217.2 540.0 217.0 542.0C216.8 544.0 213.3 547.2 211.0 548.0C208.7 548.8 204.5 548.2 203.0 547.0C201.5 545.8 200.5 542.8 202.0 541.0Z" fill="#6c6c6c" filter="url(#c3)"/><path d="M202.0 541.0C203.5 539.2 209.5 535.8 212.0 536.0C214.5 536.2 217.2 540.0 217.0 542.0C216.8 544.0 213.3 547.2 211.0 548.0C208.7 548.8 204.5 548.2 203.0 547.0C201.5 545.8 200.5 542.8 202.0 541.0Z" fill="none" stroke="#b6b6b6" stroke-width="1.2" stroke-linejoin="round" stroke-linecap="round" filter="url(#c3)" opacity="1"/><path d="M198.0 557.0C199.2 554.8 203.3 551.7 207.0 551.0C210.7 550.3 218.0 551.2 220.0 553.0C222.0 554.8 221.0 560.7 219.0 562.0C217.0 563.3 211.2 560.7 208.0 561.0C204.8 561.3 201.7 564.7 200.0 564.0C198.3 563.3 196.8 559.2 198.0 557.0Z" fill="#6c6c6c" filter="url(#c3)"/><path d="M198.0 557.0C199.2 554.8 203.3 551.7 207.0 551.0C210.7 550.3 218.0 551.2 220.0 553.0C222.0 554.8 221.0 560.7 219.0 562.0C217.0 563.3 211.2 560.7 208.0 561.0C204.8 561.3 201.7 564.7 200.0 564.0C198.3 563.3 196.8 559.2 198.0 557.0Z" fill="none" stroke="#b6b6b6" stroke-width="1.2" stroke-linejoin="round" stroke-linecap="round" filter="url(#c3)" opacity="1"/><path d="M192.0 574.0C192.7 570.2 195.7 568.2 199.0 567.0C202.3 565.8 209.3 565.5 212.0 567.0C214.7 568.5 215.7 572.8 215.0 576.0C214.3 579.2 211.3 583.7 208.0 586.0C204.7 588.3 197.7 592.0 195.0 590.0C192.3 588.0 191.3 577.8 192.0 574.0Z" fill="#6c6c6c" filter="url(#c3)"/><path d="M192.0 574.0C192.7 570.2 195.7 568.2 199.0 567.0C202.3 565.8 209.3 565.5 212.0 567.0C214.7 568.5 215.7 572.8 215.0 576.0C214.3 579.2 211.3 583.7 208.0 586.0C204.7 588.3 197.7 592.0 195.0 590.0C192.3 588.0 191.3 577.8 192.0 574.0Z" fill="none" stroke="#b6b6b6" stroke-width="1.2" stroke-linejoin="round" stroke-linecap="round" filter="url(#c3)" opacity="1"/><path d="M199.0 501.0C199.5 499.8 201.7 498.7 203.0 499.0C204.3 499.3 206.8 501.5 207.0 503.0C207.2 504.5 205.2 507.5 204.0 508.0C202.8 508.5 200.8 507.2 200.0 506.0C199.2 504.8 198.5 502.2 199.0 501.0Z" fill="none" stroke="#b0b0b0" stroke-width="1.2" stroke-linejoin="round" stroke-linecap="round" filter="url(#c3)" opacity="1"/><path d="M221 538 L223 542" fill="none" stroke="#8a8a8a" stroke-width="1.4" stroke-linejoin="round" stroke-linecap="round" filter="url(#c3)" opacity="1"/><path d="M248.5 482.5C250.8 480.3 255.4 482.4 258.0 483.0C260.6 483.6 263.5 483.7 264.0 486.0C264.5 488.3 261.9 493.2 261.0 497.0C260.1 500.8 259.8 504.8 258.8 508.6C257.8 512.4 256.5 516.5 255.0 520.0C253.5 523.5 250.5 525.8 250.0 529.4C249.5 533.0 252.2 538.1 251.9 541.5C251.6 544.9 249.2 546.3 248.4 550.0C247.6 553.7 246.8 557.8 247.0 563.5C247.2 569.2 249.2 578.9 249.6 584.0C250.0 589.1 252.7 592.3 249.6 594.0C246.5 595.7 234.1 597.8 231.0 594.0C227.9 590.2 230.7 577.2 231.0 571.0C231.3 564.8 231.4 562.5 232.8 557.0C234.2 551.5 238.3 545.5 239.7 538.0C241.1 530.5 240.7 519.0 241.4 512.0C242.1 505.0 242.8 500.9 244.0 496.0C245.2 491.1 246.2 484.7 248.5 482.5Z" fill="#020202" filter="url(#c3)"/><path d="M264.0 476.0C267.0 475.7 274.3 480.0 280.0 480.0C285.7 480.0 294.2 476.2 298.0 476.0C301.8 475.8 304.0 477.5 303.0 479.0C302.0 480.5 297.2 483.8 292.0 485.0C286.8 486.2 277.0 486.5 272.0 486.0C267.0 485.5 263.3 483.7 262.0 482.0C260.7 480.3 261.0 476.3 264.0 476.0Z" fill="#0c0c0c" filter="url(#c3)"/><path d="M266.0 494.0C267.5 492.5 270.7 490.8 275.0 490.0C279.3 489.2 287.3 489.2 292.0 489.5C296.7 489.8 301.3 490.6 303.0 492.0C304.7 493.4 304.2 496.2 302.0 498.0C299.8 499.8 294.7 502.3 290.0 503.0C285.3 503.7 278.0 502.7 274.0 502.0C270.0 501.3 267.3 500.3 266.0 499.0C264.7 497.7 264.5 495.5 266.0 494.0Z" fill="#111" filter="url(#c3)"/><path d="M268.0 492.0C269.7 490.4 275.3 488.5 280.0 487.5C284.7 486.5 292.0 485.8 296.0 486.0C300.0 486.2 303.7 487.2 304.0 488.5C304.3 489.8 301.7 492.8 298.0 494.0C294.3 495.2 286.7 495.5 282.0 496.0C277.3 496.5 272.3 497.7 270.0 497.0C267.7 496.3 266.3 493.6 268.0 492.0Z" fill="#3c3c3c" filter="url(#c3)"/><path d="M288.0 505.0C289.2 503.3 295.3 500.2 298.0 500.0C300.7 499.8 304.0 502.0 304.0 504.0C304.0 506.0 300.2 511.0 298.0 512.0C295.8 513.0 292.7 511.2 291.0 510.0C289.3 508.8 286.8 506.7 288.0 505.0Z" fill="#0a0a0a" filter="url(#c3)"/><path d="M308.0 462.0C307.8 464.2 307.0 470.3 306.5 475.0C306.0 479.7 305.8 485.3 305.0 490.0C304.2 494.7 302.8 499.3 302.0 503.0C301.2 506.7 300.3 510.5 300.0 512.0" fill="none" stroke="#9a9a9a" stroke-width="1.5" stroke-linejoin="round" stroke-linecap="round" filter="url(#c3)" opacity="1"/><path d="M272.0 504.0C273.8 504.4 279.3 505.8 283.0 506.5C286.7 507.2 292.2 507.8 294.0 508.0" fill="none" stroke="#8e8e8e" stroke-width="1.3" stroke-linejoin="round" stroke-linecap="round" filter="url(#c3)" opacity="1"/><path d="M289.5 515.0C290.2 512.8 291.8 512.0 292.5 514.0C293.2 516.0 294.2 524.2 294.0 527.0C293.8 529.8 292.0 530.5 291.0 530.5C290.0 530.5 288.2 529.6 288.0 527.0C287.8 524.4 288.8 517.2 289.5 515.0Z" fill="#8c8c8c" filter="url(#c3)"/><path d="M295.5 514.0C296.2 511.7 298.1 510.8 299.0 513.0C299.9 515.2 301.2 524.0 301.0 527.0C300.8 530.0 299.0 531.0 298.0 531.0C297.0 531.0 295.4 529.8 295.0 527.0C294.6 524.2 294.8 516.3 295.5 514.0Z" fill="#8c8c8c" filter="url(#c3)"/><path d="M302.0 515.0C302.5 513.2 304.1 512.8 305.0 515.0C305.9 517.2 307.6 525.3 307.5 528.0C307.4 530.7 305.4 531.3 304.5 531.0C303.6 530.7 302.4 528.7 302.0 526.0C301.6 523.3 301.5 516.8 302.0 515.0Z" fill="#8c8c8c" filter="url(#c3)"/><ellipse cx="290.8" cy="528" rx="2.2" ry="2.6" fill="#f6f6f6" filter="url(#c3)"/><ellipse cx="297.8" cy="528.5" rx="2.4" ry="2.8" fill="#f6f6f6" filter="url(#c3)"/><ellipse cx="304.5" cy="528.5" rx="2.3" ry="2.6" fill="#f6f6f6" filter="url(#c3)"/><ellipse cx="308.5" cy="531" rx="2.2" ry="1.4" fill="#f6f6f6" filter="url(#c3)"/><ellipse cx="294.5" cy="537" rx="3.0" ry="2.4" fill="#f2f2f2" filter="url(#c3)"/><ellipse cx="302.5" cy="539.5" rx="2.6" ry="2.8" fill="#f2f2f2" filter="url(#c3)"/><ellipse cx="309.5" cy="540.5" rx="2.8" ry="3.0" fill="#f2f2f2" filter="url(#c3)"/><ellipse cx="314" cy="543.5" rx="1.6" ry="1.2" fill="#f2f2f2" filter="url(#c3)"/><path d="M300.5 541.0C301.1 539.2 304.0 539.2 304.5 541.0C305.0 542.8 304.1 550.2 303.5 552.0C302.9 553.8 301.5 553.8 301.0 552.0C300.5 550.2 299.9 542.8 300.5 541.0Z" fill="#969696" filter="url(#c3)"/><path d="M307.0 543.0C308.1 541.3 311.8 541.2 312.0 543.0C312.2 544.8 309.1 552.3 308.0 554.0C306.9 555.7 305.7 554.8 305.5 553.0C305.3 551.2 305.9 544.7 307.0 543.0Z" fill="#969696" filter="url(#c3)"/><path d="M296.5 550.0C296.9 551.0 298.9 553.7 299.0 556.0C299.1 558.3 297.4 561.5 297.0 564.0C296.6 566.5 295.9 569.1 296.5 571.0C297.1 572.9 299.1 575.1 300.5 575.5C301.9 575.9 304.0 575.1 305.0 573.5C306.0 571.9 306.3 568.6 306.5 566.0C306.7 563.4 305.6 560.5 306.0 558.0C306.4 555.5 308.5 552.2 309.0 551.0" fill="none" stroke="#a4a4a4" stroke-width="2.2" stroke-linejoin="round" stroke-linecap="round" filter="url(#c3)" opacity="1"/><path d="M253.0 555.0C253.6 554.8 255.7 556.8 256.0 558.0C256.3 559.2 255.6 561.8 255.0 562.0C254.4 562.2 252.8 560.2 252.5 559.0C252.2 557.8 252.4 555.2 253.0 555.0Z" fill="none" stroke="#7e7e7e" stroke-width="0.9" stroke-linejoin="round" stroke-linecap="round" filter="url(#c3)" opacity="1"/><path d="M262.0 510.0C266.0 507.8 275.7 508.7 280.0 512.0C284.3 515.3 287.0 523.7 288.0 530.0C289.0 536.3 289.0 545.7 286.0 550.0C283.0 554.3 275.0 556.3 270.0 556.0C265.0 555.7 258.3 553.2 256.0 548.0C253.7 542.8 255.0 531.3 256.0 525.0C257.0 518.7 258.0 512.2 262.0 510.0Z" fill="#4a4a4a" filter="url(#b3)"/></g><rect x="118" y="117" width="235" height="1" fill="#ff0000"/><rect x="235" y="19" width="1" height="197" fill="#ff8400"/></svg>
<div style="left:236px;top:350px;width:13px;height:19px;background:#000;"></div>
<div style="left:235px;top:566px;width:14px;height:19px;background:#000;"></div>
<span class="lbl" style="left:236.5px;top:352px;font-size:17.0px;color:#80ff80;width:13px;text-align:center;">T</span>
<span class="lbl" style="left:236px;top:567px;font-size:17.0px;color:#80ff80;width:13px;text-align:center;">B</span>
<span class="lbl" style="left:7px;top:459px;font-size:17.0px;color:#80ff80;">P</span>
<span class="lbl" style="left:456px;top:459px;font-size:17.0px;color:#80ff80;width:20px;text-align:right;">A</span>
<span class="lbl" style="left:307px;top:562px;font-size:17.8px;color:#80ff80;width:168.5px;text-align:right;">125.0000</span>
<svg style="left:7px;top:350px" width="470" height="235" viewBox="0 0 470 235"><g fill="#ff0000"><rect x="0" y="0" width="9" height="1"/><rect x="0" y="5" width="6" height="1"/><rect x="0" y="9" width="9" height="1"/><rect x="0" y="14" width="6" height="1"/><rect x="0" y="19" width="9" height="1"/><rect x="0" y="24" width="6" height="1"/><rect x="0" y="28" width="9" height="1"/><rect x="0" y="33" width="6" height="1"/><rect x="0" y="38" width="9" height="1"/><rect x="0" y="42" width="6" height="1"/><rect x="0" y="47" width="9" height="1"/><rect x="0" y="52" width="6" height="1"/><rect x="0" y="56" width="9" height="1"/><rect x="0" y="61" width="6" height="1"/><rect x="0" y="66" width="9" height="1"/><rect x="0" y="71" width="6" height="1"/><rect x="0" y="75" width="9" height="1"/><rect x="0" y="80" width="6" height="1"/><rect x="0" y="85" width="9" height="1"/><rect x="0" y="89" width="6" height="1"/><rect x="0" y="94" width="9" height="1"/><rect x="0" y="99" width="6" height="1"/><rect x="0" y="103" width="9" height="1"/><rect x="0" y="108" width="6" height="1"/><rect x="0" y="113" width="9" height="1"/><rect x="0" y="118" width="6" height="1"/><rect x="0" y="122" width="9" height="1"/><rect x="0" y="127" width="6" height="1"/><rect x="0" y="132" width="9" height="1"/><rect x="0" y="136" width="6" height="1"/><rect x="0" y="141" width="9" height="1"/><rect x="0" y="146" width="6" height="1"/><rect x="0" y="150" width="9" height="1"/><rect x="0" y="155" width="6" height="1"/><rect x="0" y="160" width="9" height="1"/><rect x="0" y="165" width="6" height="1"/><rect x="0" y="169" width="9" height="1"/><rect x="0" y="174" width="6" height="1"/><rect x="0" y="179" width="9" height="1"/><rect x="0" y="183" width="6" height="1"/><rect x="0" y="188" width="9" height="1"/><rect x="0" y="193" width="6" height="1"/><rect x="0" y="197" width="9" height="1"/><rect x="0" y="202" width="6" height="1"/><rect x="0" y="207" width="9" height="1"/><rect x="0" y="212" width="6" height="1"/><rect x="0" y="216" width="9" height="1"/><rect x="0" y="221" width="6" height="1"/><rect x="0" y="226" width="9" height="1"/><rect x="0" y="230" width="6" height="1"/></g><g fill="#ff8400"><rect x="118" y="227" width="1" height="8"/><rect x="123" y="230" width="1" height="5"/><rect x="127" y="227" width="1" height="8"/><rect x="132" y="230" width="1" height="5"/><rect x="137" y="227" width="1" height="8"/><rect x="141" y="230" width="1" height="5"/><rect x="146" y="227" width="1" height="8"/><rect x="151" y="230" width="1" height="5"/><rect x="155" y="227" width="1" height="8"/><rect x="160" y="230" width="1" height="5"/><rect x="165" y="227" width="1" height="8"/><rect x="169" y="230" width="1" height="5"/><rect x="174" y="227" width="1" height="8"/><rect x="179" y="230" width="1" height="5"/><rect x="184" y="227" width="1" height="8"/><rect x="188" y="230" width="1" height="5"/><rect x="193" y="227" width="1" height="8"/><rect x="198" y="230" width="1" height="5"/><rect x="202" y="227" width="1" height="8"/><rect x="207" y="230" width="1" height="5"/><rect x="212" y="227" width="1" height="8"/><rect x="216" y="230" width="1" height="5"/><rect x="221" y="227" width="1" height="8"/><rect x="226" y="230" width="1" height="5"/><rect x="230" y="227" width="1" height="8"/><rect x="235" y="230" width="1" height="5"/><rect x="240" y="227" width="1" height="8"/><rect x="244" y="230" width="1" height="5"/><rect x="249" y="227" width="1" height="8"/><rect x="254" y="230" width="1" height="5"/><rect x="258" y="227" width="1" height="8"/><rect x="263" y="230" width="1" height="5"/><rect x="268" y="227" width="1" height="8"/><rect x="272" y="230" width="1" height="5"/><rect x="277" y="227" width="1" height="8"/><rect x="282" y="230" width="1" height="5"/><rect x="286" y="227" width="1" height="8"/><rect x="291" y="230" width="1" height="5"/><rect x="296" y="227" width="1" height="8"/><rect x="301" y="230" width="1" height="5"/><rect x="305" y="227" width="1" height="8"/><rect x="310" y="230" width="1" height="5"/><rect x="315" y="227" width="1" height="8"/><rect x="319" y="230" width="1" height="5"/><rect x="324" y="227" width="1" height="8"/><rect x="329" y="230" width="1" height="5"/><rect x="333" y="227" width="1" height="8"/><rect x="338" y="230" width="1" height="5"/><rect x="343" y="227" width="1" height="8"/><rect x="347" y="230" width="1" height="5"/><rect x="352" y="227" width="1" height="8"/></g></svg>
<div style="left:480px;top:100px;width:1px;height:240px;background:#fff;"></div>
<div style="left:481px;top:100px;width:17px;height:240px;background:#f0f0f0;"></div>
<div style="left:481px;top:100px;width:17px;height:1px;background:#fff;"></div>
<div style="left:481px;top:209px;width:15px;height:21px;background:#cdcdcd;"></div>
<svg style="left:0;top:0" width="1366" height="738" viewBox="0 0 1366 738"><path d="M485.7 110.8L489 106.9L492.3 110.8" stroke="#5a5a5a" stroke-width="2.3" fill="none"/></svg>
<svg style="left:0;top:0" width="1366" height="738" viewBox="0 0 1366 738"><path d="M485.7 329.2L489 333.1L492.3 329.2" stroke="#5a5a5a" stroke-width="2.3" fill="none"/></svg>
<div style="left:980px;top:100px;width:1px;height:240px;background:#fff;"></div>
<div style="left:981px;top:100px;width:17px;height:240px;background:#f0f0f0;"></div>
<div style="left:981px;top:100px;width:17px;height:1px;background:#fff;"></div>
<div style="left:981px;top:209px;width:15px;height:21px;background:#cdcdcd;"></div>
<svg style="left:0;top:0" width="1366" height="738" viewBox="0 0 1366 738"><path d="M985.7 110.8L989 106.9L992.3 110.8" stroke="#5a5a5a" stroke-width="2.3" fill="none"/></svg>
<svg style="left:0;top:0" width="1366" height="738" viewBox="0 0 1366 738"><path d="M985.7 329.2L989 333.1L992.3 329.2" stroke="#5a5a5a" stroke-width="2.3" fill="none"/></svg>
<div style="left:480px;top:347px;width:1px;height:241px;background:#fff;"></div>
<div style="left:481px;top:347px;width:17px;height:241px;background:#f0f0f0;"></div>
<div style="left:481px;top:347px;width:17px;height:1px;background:#fff;"></div>
<div style="left:481px;top:457px;width:15px;height:21px;background:#cdcdcd;"></div>
<svg style="left:0;top:0" width="1366" height="738" viewBox="0 0 1366 738"><path d="M485.7 357.8L489 353.9L492.3 357.8" stroke="#5a5a5a" stroke-width="2.3" fill="none"/></svg>
<svg style="left:0;top:0" width="1366" height="738" viewBox="0 0 1366 738"><path d="M485.7 577.2L489 581.1L492.3 577.2" stroke="#5a5a5a" stroke-width="2.3" fill="none"/></svg>
<div style="left:504px;top:347px;width:470px;height:241px;background:#fff;border:3px solid #c0ffc0;"></div>
<div style="left:974px;top:347px;width:24px;height:241px;background:#f0f0f0;"></div>
<svg style="left:977px;top:352px;" width="17" height="16" viewBox="0 0 17 16"><rect x=".5" y=".5" width="12" height="11.500" rx="1" fill="#6fb4f0" stroke="#3a5fb0" stroke-width=".9"/><rect x="4" y="4" width="12.500" height="11.500" rx="1" fill="#8fb45f" stroke="#3a8a3a" stroke-width=".9"/><rect x="4.400" y="4.400" width="7.700" height="7.200" fill="#22b0de"/></svg>
<svg style="left:977px;top:374px;" width="17" height="16" viewBox="0 0 17 16"><path d="M.5 5l6-4.500h10l-5.500 4.500z" fill="#36b34a" stroke="#1d4a2a" stroke-width=".8"/><path d="M.5 5h5.500v10.500h-5.500z" fill="#0f7a3a" stroke="#1d4a2a" stroke-width=".8"/><path d="M6 5l10-4.300v10.500l-10 4.300z" fill="#a9cdf4" stroke="#2a3f7a" stroke-width=".8"/><path d="M7.500 6.500l7-3v7.500l-7 3z" fill="#cfe4fb" opacity=".7"/></svg>
<svg style="left:977px;top:396px;" width="17" height="16" viewBox="0 0 17 16"><path d="M5.500 0h5.500v16h-5.500zM.5 5h16v6h-16z" fill="#f4e4a4" stroke="#d9b860" stroke-width=".8"/><rect x="5.500" y="5" width="5.500" height="6" fill="#f4f0e4" stroke="#d9b860" stroke-width=".8"/><path d="M11 0l2 1.500v3.500M16.500 5v6" stroke="#e0c470" stroke-width=".8" fill="none"/></svg>
<svg style="left:978px;top:418px;" width="16" height="16" viewBox="0 0 16 16"><rect x="1.0" y="3.0" width="2" height="2" fill="#c9a86a"/><rect x="4.2" y="3.0" width="2" height="2" fill="#c9a86a"/><rect x="7.4" y="3.0" width="2" height="2" fill="#c9a86a"/><rect x="10.6" y="3.0" width="2" height="2" fill="#c9a86a"/><rect x="1.0" y="6.0" width="2" height="2" fill="#c9a86a"/><rect x="4.2" y="6.0" width="2" height="2" fill="#c9a86a"/><rect x="7.4" y="6.0" width="2" height="2" fill="#c9a86a"/><rect x="10.6" y="6.0" width="2" height="2" fill="#c9a86a"/><rect x="1.0" y="9.0" width="2" height="2" fill="#c9a86a"/><rect x="4.2" y="9.0" width="2" height="2" fill="#c9a86a"/><rect x="7.4" y="9.0" width="2" height="2" fill="#c9a86a"/><rect x="10.6" y="9.0" width="2" height="2" fill="#c9a86a"/><rect x="1.0" y="12.0" width="2" height="2" fill="#c9a86a"/><rect x="4.2" y="12.0" width="2" height="2" fill="#c9a86a"/><rect x="7.4" y="12.0" width="2" height="2" fill="#c9a86a"/><rect x="10.6" y="12.0" width="2" height="2" fill="#c9a86a"/><path d="M3 1.500h8q2.500.500 2.500 3v7" stroke="#e6d3a8" stroke-width="1.200" fill="none" stroke-dasharray="2 1.200"/></svg>
<svg style="left:977px;top:439px;" width="17" height="17" viewBox="0 0 17 17"><path d="M0 8.500l8-5.500 8.500 5-6.500 8.500z" fill="#e04060"/><path d="M6.500 1l4 1.500v10.500l-4-1.500z" fill="#3a8ae8" stroke="#2060b0" stroke-width=".5"/><path d="M10.500 2.500l3 3v7l-3 .5z" fill="#f4d020" stroke="#c8a010" stroke-width=".5"/><path d="M0 8.500l6.500 1.500 3.500 6.500z" fill="#c83050"/></svg>
<div style="left:976px;top:461px;width:19px;height:1px;background:#a0a0a0;"></div>
<svg style="left:977px;top:470px;" width="16" height="12" viewBox="0 0 16 12"><path d="M.5 4.500q7-6.500 14.500-.5" stroke="#111" stroke-width="1.200" fill="none"/><path d="M1 7q6.500-6 13.500 0q-6.500 5-13.500 0z" fill="#fff" stroke="#333" stroke-width=".8"/><circle cx="7.700" cy="6.800" r="2.600" fill="#3a66c8"/><circle cx="7.700" cy="6.800" r="1" fill="#0a1a50"/></svg>
<svg style="left:977px;top:490px;" width="16" height="17" viewBox="0 0 16 17"><path d="M3.970 2.980A6.500 6.500 0 0 1 13.330 11.550" fill="none" stroke="#111" stroke-width="1.500"/><path d="M1.230 8.870A6.500 6.500 0 0 0 11.430 13.620" fill="none" stroke="#111" stroke-width="1.500"/><path d="M1.700 4.400l4.300-3.300.3 4.600z" fill="#111"/><path d="M14 12.100l-4.400 3.500-.2-4.700z" fill="#111"/></svg>
<svg style="left:978px;top:512px;" width="16" height="16" viewBox="0 0 16 16"><path d="M7.700 1.500v12M1.500 7.400h12.400" stroke="#111" stroke-width="1.100"/><path d="M7.700 .4l2 2.700h-4zM7.700 14.500l2-2.700h-4zM.9 7.400l2.700-2v4zM14.500 7.400l-2.700-2v4z" fill="#111"/></svg>
<div style="left:976px;top:533px;width:19px;height:1px;background:#a0a0a0;"></div>
<svg style="left:977px;top:540px;" width="17" height="17" viewBox="0 0 17 17"><path d="M8 0v16.500" stroke="#f39a3a" stroke-width="1.600"/><path d="M0 9h16.500" stroke="#f01010" stroke-width="1.400"/><path d="M2 14.500l12.500-11.500" stroke="#10d010" stroke-width="1.500"/><circle cx="8" cy="9" r="1" fill="#222"/></svg>
<svg style="left:977px;top:563px;" width="17" height="13" viewBox="0 0 17 13"><circle cx="3.500" cy="9" r="2.800" fill="#22d6e8" stroke="#111" stroke-width="1.100"/><circle cx="10.500" cy="9" r="2.800" fill="#22d6e8" stroke="#111" stroke-width="1.100"/><path d="M1.500 7l3.500-5.500 1.500 1M8.500 7l3.500-5.500 2.500 0 1.500 2M6.300 8.500h1.400" stroke="#111" stroke-width="1" fill="none"/></svg>
<div style="left:976px;top:583px;width:19px;height:1px;background:#a0a0a0;"></div>
<div style="left:1004px;top:96px;width:360px;height:1px;background:#a0a0a0;"></div>
<div style="left:1004px;top:97px;width:360px;height:1px;background:#696969;"></div>
<div style="left:1004px;top:98px;width:359px;height:1px;background:#9aa2ac;"></div>
<div style="left:1004px;top:98px;width:1px;height:617px;background:#808898;"></div>
<div style="left:1005px;top:98px;width:1px;height:617px;background:#fff;"></div>
<div style="left:1006px;top:98px;width:340px;height:617px;background:#f0f0f0;"></div>
<div style="left:1004px;top:715px;width:360px;height:1px;background:#8a909a;"></div>
<div style="left:1363px;top:96px;width:1px;height:620px;background:#7e8694;"></div>
<div style="left:1364px;top:96px;width:2px;height:622px;background:#f0f0f0;"></div>
<div style="left:0px;top:716px;width:1366px;height:1px;background:#fff;"></div>
<div style="left:1346px;top:98px;width:17px;height:617px;background:#f0f0f0;border-left:1px solid #fafafa;"></div>
<div style="left:1347px;top:116px;width:15px;height:553px;background:#c9c9c9;"></div>
<svg style="left:0;top:0" width="1366" height="738" viewBox="0 0 1366 738"><path d="M1351.2 110.3L1354.5 106.4L1357.8 110.3" stroke="#5a5a5a" stroke-width="2.3" fill="none"/></svg>
<svg style="left:0;top:0" width="1366" height="738" viewBox="0 0 1366 738"><path d="M1351.2 704.2L1354.5 708.1L1357.8 704.2" stroke="#5a5a5a" stroke-width="2.3" fill="none"/></svg>
<div style="left:1006px;top:100px;width:49px;height:24px;background:#fff;"></div>
<div style="left:1005px;top:98px;width:1px;height:23px;background:#808898;"></div>
<div style="left:1055px;top:100px;width:1px;height:21px;background:#9aa0aa;"></div>
<span class="tab" style="left:1014px;top:105px;">Masks</span>
<div class="btab" style="left:1056px;top:101px;width:92px;height:20px;"></div>
<span class="tab" style="left:1064px;top:106px;">Measurements</span>
<div class="btab" style="left:1149px;top:101px;width:86px;height:20px;"></div>
<span class="tab" style="left:1158px;top:106px;">Annotations</span>
<div class="btab" style="left:1236px;top:101px;width:98px;height:20px;"></div>
<span class="tab" style="left:1244px;top:106px;">X-ray Objects</span>
<div style="left:1007px;top:124px;width:335px;height:109px;background:#fff;border:1px solid #828790;"></div>
<div style="left:1063px;top:126px;width:1px;height:24px;background:#e5e5e5;"></div>
<div style="left:1103px;top:126px;width:1px;height:24px;background:#e5e5e5;"></div>
<div style="left:1153px;top:126px;width:1px;height:24px;background:#e5e5e5;"></div>
<div style="left:1203px;top:126px;width:1px;height:24px;background:#e5e5e5;"></div>
<div style="left:1243px;top:126px;width:1px;height:24px;background:#e5e5e5;"></div>
<span class="hd" style="left:1014px;top:133px;">Name</span>
<span class="hd" style="left:1070px;top:133px;">Visi...</span>
<span class="hd" style="left:1110px;top:133px;">Lowe...</span>
<span class="hd" style="left:1164px;top:133px;">High...</span>
<span class="hd" style="left:1212px;top:133px;">As...</span>
<svg style="left:1197px;top:237px;" width="16" height="17" viewBox="0 0 16 17"><path d="M2.5 .5h6.5l4.5 4.5v10.5h-11z" fill="url(#gDoc)" stroke="#4a668e"/><path d="M9 .5v4.5h4.5" fill="#eef4fb" stroke="#4a668e" stroke-linejoin="round"/><path d="M9.6 5.4l3.4.1v2.8z" fill="#4a6488" opacity=".75"/></svg>
<svg style="left:1220px;top:238px;" width="14" height="16" viewBox="0 0 14 16"><path d="M1.500 2l11 11.500M12.500 2l-11 11.500" stroke="#e9aeae" stroke-width="2.300" stroke-linecap="round"/></svg>
<svg style="left:1240px;top:237px;" width="15" height="16" viewBox="0 0 15 16"><rect x=".5" y=".5" width="14" height="15" fill="url(#gI)" stroke="#f1d59a" stroke-width=".8"/><circle cx="7.300" cy="4.300" r="1.200" fill="#fff"/><path d="M5.500 6.800h2.900v4.700h1.100v1.100h-4.200v-1.100h1.300v-3.600h-1.100z" fill="#fff"/></svg>
<svg style="left:1261px;top:237px;" width="16" height="17" viewBox="0 0 16 17"><path d="M.5 2.500h5.500v-2h4l4.500 4.500v10.500h-8v-2h-6z" fill="url(#gDocD)" stroke="#b4c6dc" stroke-width=".9"/><path d="M6 2.500l3.500 3.500v7.500M10 .5v4.500h4.500M6 2.500v3.500h3.500" fill="none" stroke="#b4c6dc" stroke-width=".8"/></svg>
<svg style="left:1283px;top:239px;" width="15" height="13" viewBox="0 0 15 13"><path d="M4.500 .8h9.500l-4 7h-9.500zM.5 7.800v3h9.500l4-7v-3M10 7.800v3" fill="#f6f6f6" stroke="#bdbdbd" stroke-width="1" stroke-linejoin="round"/></svg>
<svg style="left:1303px;top:236px;" width="17" height="18" viewBox="0 0 17 18"><path d="M4 5l6-2.500 6 2.500v8.500l-6 3.500-6-3.500z" fill="url(#gCube)" stroke="#8fb0d8" stroke-width=".6"/><path d="M4 5l6 2.500 6-2.500M10 7.500v9.500" stroke="#c7daf0" stroke-width=".8" fill="none"/><g transform="scale(.8)"><path d="M5 0l1.500 3.300 3.500.4-2.600 2.400.8 3.500-3.200-1.800-3.200 1.800.8-3.500-2.600-2.400 3.500-.4z" fill="#f6df8e" stroke="#ecd27a" stroke-width=".4"/></g></svg>
<svg style="left:1325px;top:238px;" width="15" height="15" viewBox="0 0 15 15"><circle cx="7.500" cy="7.500" r="7.200" fill="url(#gGy)"/><circle cx="7.500" cy="7" r="6.500" fill="#b9b9b9" opacity=".55"/><path d="M3.800 5.800h7.400l-3.700 4.200z" fill="#111"/></svg>
<div style="left:1007px;top:264px;width:337px;height:1px;background:repeating-linear-gradient(90deg,#a0a0a0 0,#a0a0a0 2px,transparent 2px,transparent 4px);"></div>
<div style="left:1007px;top:265px;width:337px;height:1px;background:repeating-linear-gradient(90deg,#d0d0d0 0,#d0d0d0 2px,transparent 2px,transparent 4px);"></div>
<div style="left:1006px;top:268px;width:49px;height:24px;background:#fff;"></div>
<div style="left:1005px;top:266px;width:1px;height:23px;background:#808898;"></div>
<div style="left:1055px;top:268px;width:1px;height:21px;background:#9aa0aa;"></div>
<span class="tab" style="left:1014px;top:273px;">Parts</span>
<div class="btab" style="left:1056px;top:269px;width:116px;height:20px;"></div>
<span class="tab" style="left:1064px;top:274px;">Analysis Objects</span>
<div class="btab" style="left:1173px;top:269px;width:110px;height:20px;"></div>
<span class="tab" style="left:1182px;top:274px;">Reslice Objects</span>
<div style="left:1284px;top:269px;width:62px;height:20px;overflow:hidden;"><div class="btab" style="left:0px;top:0px;width:85px;height:20px;"></div><span class="tab" style="left:8px;top:5px;">Soft tissue</span></div>
<div style="left:1330px;top:267px;width:16px;height:22px;background:rgba(205,228,250,0.6);border:1px solid #a8c8ea;"></div>
<svg style="left:1316px;top:266px" width="32" height="24" viewBox="0 0 32 24"><path d="M8.5 5v10l-5.5-5z" fill="#9a9a9a"/><path d="M17 4v13.5l3.2-3 2.4 5.2 2-.9-2.3-5.2h4.2z" fill="#000" stroke="#fff" stroke-width="0.6"/></svg>
<div style="left:1007px;top:292px;width:335px;height:77px;background:#fff;border:1px solid #828790;"></div>
<div style="left:1068px;top:294px;width:1px;height:24px;background:#e5e5e5;"></div>
<div style="left:1103px;top:294px;width:1px;height:24px;background:#e5e5e5;"></div>
<div style="left:1148px;top:294px;width:1px;height:24px;background:#e5e5e5;"></div>
<div style="left:1183px;top:294px;width:1px;height:24px;background:#e5e5e5;"></div>
<div style="left:1243px;top:294px;width:1px;height:24px;background:#e5e5e5;"></div>
<div style="left:1288px;top:294px;width:1px;height:24px;background:#e5e5e5;"></div>
<div style="left:1333px;top:294px;width:1px;height:24px;background:#e5e5e5;"></div>
<span class="hd" style="left:1014px;top:301px;">Name</span>
<span class="hd" style="left:1075px;top:301px;">Vi...</span>
<span class="hd" style="left:1110px;top:301px;">Con...</span>
<span class="hd" style="left:1155px;top:301px;">Tr...</span>
<span class="hd" style="left:1190px;top:301px;">Transp...</span>
<span class="hd" style="left:1249px;top:301px;">Qua...</span>
<span class="hd" style="left:1295px;top:301px;">Pho...</span>
<svg style="left:1156px;top:373px;" width="16" height="17" viewBox="0 0 16 17"><path d="M2.5 .5h6.5l4.5 4.5v10.5h-11z" fill="url(#gDocD)" stroke="#b9cbe0"/><path d="M9 .5v4.5h4.5" fill="#eef4fb" stroke="#b9cbe0" stroke-linejoin="round"/></svg>
<svg style="left:1177px;top:374px;" width="16" height="15" viewBox="0 0 16 15"><path d="M.5 .5h5l2.5 2.5v7h-7.500z" fill="#edf3fb" stroke="#b4c8e4"/><path d="M6.500 4.500h5l2.500 2.500v7.500h-7.500z" fill="#edf3fb" stroke="#b4c8e4"/><path d="M2 4h4M2 6h3M8 8.500h4M8 10.500h4M8 12.500h4" stroke="#c4d4ea" stroke-width=".9"/></svg>
<svg style="left:1200px;top:374px;" width="14" height="16" viewBox="0 0 14 16"><path d="M1.500 2l11 11.500M12.500 2l-11 11.500" stroke="#e9aeae" stroke-width="2.300" stroke-linecap="round"/></svg>
<svg style="left:1219px;top:373px;" width="15" height="16" viewBox="0 0 15 16"><rect x=".5" y=".5" width="14" height="15" fill="url(#gI)" stroke="#f1d59a" stroke-width=".8"/><circle cx="7.300" cy="4.300" r="1.200" fill="#fff"/><path d="M5.500 6.800h2.900v4.700h1.100v1.100h-4.200v-1.100h1.300v-3.600h-1.100z" fill="#fff"/></svg>
<svg style="left:1240px;top:373px;" width="16" height="17" viewBox="0 0 16 17"><path d="M.5 2.500h5.500v-2h4l4.500 4.500v10.500h-8v-2h-6z" fill="url(#gDocD)" stroke="#b4c6dc" stroke-width=".9"/><path d="M6 2.500l3.500 3.500v7.500M10 .5v4.500h4.500M6 2.500v3.500h3.500" fill="none" stroke="#b4c6dc" stroke-width=".8"/></svg>
<svg style="left:1262px;top:373px;" width="16" height="16" viewBox="0 0 16 16"><path d="M1 4l4-3h9.500l-4 3z" fill="#f9e48a" stroke="#6f9fd8" stroke-width=".7"/><path d="M1 4h9.500v10.500h-9.500z" fill="#a9cbf0" stroke="#6f9fd8" stroke-width=".7"/><path d="M10.500 4l4-3v10.500l-4 3z" fill="#f6d86a" stroke="#6f9fd8" stroke-width=".7"/></svg>
<svg style="left:1283px;top:373px;" width="16" height="16" viewBox="0 0 16 16"><path d="M7.500 0l3 3.500h-6zM7.500 15.500l3-3.500h-6zM0 7.700l3.500-3v6zM15.500 7.700l-3.500-3v6z" fill="#b4b4b4"/><circle cx="7.700" cy="7.700" r="3.300" fill="none" stroke="#c4c4c4" stroke-width="1" stroke-dasharray="1.200 1.200"/></svg>
<svg style="left:1303px;top:373px;" width="16" height="16" viewBox="0 0 16 16"><path d="M0 5l5-4.500 2.500 5z" fill="#b4cbe6"/><circle cx="8.500" cy="9" r="5.500" fill="none" stroke="#b9b9b9" stroke-width="1" stroke-dasharray="1.500 1.300"/><path d="M4 3q5-2 9 1.500" stroke="#b9b9b9" stroke-width="1" fill="none"/></svg>
<svg style="left:1325px;top:374px;" width="15" height="15" viewBox="0 0 15 15"><circle cx="7.500" cy="7.500" r="7.200" fill="url(#gGy)"/><circle cx="7.500" cy="7" r="6.500" fill="#b9b9b9" opacity=".55"/><path d="M3.800 5.800h7.400l-3.700 4.200z" fill="#111"/></svg>
<div style="left:1007px;top:399px;width:337px;height:1px;background:repeating-linear-gradient(90deg,#a0a0a0 0,#a0a0a0 2px,transparent 2px,transparent 4px);"></div>
<div style="left:1007px;top:400px;width:337px;height:1px;background:repeating-linear-gradient(90deg,#d0d0d0 0,#d0d0d0 2px,transparent 2px,transparent 4px);"></div>
<div class="btab" style="left:1006px;top:404px;width:43px;height:20px;"></div>
<span class="tab" style="left:1014px;top:409px;">STLs</span>
<div class="btab" style="left:1050px;top:404px;width:74px;height:20px;"></div>
<span class="tab" style="left:1058px;top:409px;">Polylines</span>
<div class="btab" style="left:1125px;top:404px;width:128px;height:20px;"></div>
<span class="tab" style="left:1134px;top:409px;">Simulation Objects</span>
<div style="left:1254px;top:403px;width:68px;height:24px;background:#fff;"></div>
<div style="left:1253px;top:403px;width:1px;height:21px;background:#808898;"></div>
<div style="left:1322px;top:403px;width:1px;height:21px;background:#9aa0aa;"></div>
<span class="tab" style="left:1262px;top:408px;">FEA Mesh</span>
<div style="left:1007px;top:427px;width:337px;height:110px;background:#fff;border:1px solid #828790;"></div>
<div style="left:1157px;top:429px;width:1px;height:24px;background:#e5e5e5;"></div>
<div style="left:1197px;top:429px;width:1px;height:24px;background:#e5e5e5;"></div>
<div style="left:1252px;top:429px;width:1px;height:24px;background:#e5e5e5;"></div>
<div style="left:1307px;top:429px;width:1px;height:24px;background:#e5e5e5;"></div>
<span class="hd2" style="left:1012px;top:435px;">Name</span>
<span class="hd2" style="left:1162px;top:435px;">Visibl</span>
<span class="hd2" style="left:1202px;top:435px;">Material</span>
<span class="hd2" style="left:1257px;top:435px;">Contour</span>
<svg style="left:1164px;top:542px;" width="16" height="16" viewBox="0 0 16 16"><path d="M.5 15v-9.500h13v9.500z" fill="#f59a3c" stroke="#d9762a" stroke-width=".7"/><path d="M.6 15l1.400-5.500h13l-1.500 5.500z" fill="url(#gFold)" stroke="#e0960a" stroke-width=".6"/><path d="M3 5.500q3-6 9.500-3.500l1-1.800 1.800 5.800-5.800.3 1.300-1.800q-3.500-1.500-5.800 1.500z" fill="#2b8be6" stroke="#1a6fd0" stroke-width=".5"/></svg>
<svg style="left:1184px;top:542px;" width="16" height="15" viewBox="0 0 16 15"><path d="M.5 .5h5l2.5 2.5v7h-7.500z" fill="#f4f4f4" stroke="#b9b9b9"/><path d="M6.500 4.500h5l2.500 2.500v7.500h-7.500z" fill="#f4f4f4" stroke="#b9b9b9"/><path d="M2 4h4M2 6h3M8 8.500h4M8 10.500h4M8 12.500h4" stroke="#c9c9c9" stroke-width=".9"/></svg>
<svg style="left:1206px;top:542px;" width="13" height="15" viewBox="0 0 13 15"><path d="M1.500 1.500l10 11.500M11.500 1.500l-10 11.500" stroke="#a9a9a9" stroke-width="2.200" stroke-linecap="round"/></svg>
<svg style="left:1224px;top:541px;" width="15" height="16" viewBox="0 0 15 16"><rect x=".5" y=".5" width="14" height="15" fill="#c9c9c9" stroke="#b4b4b4" stroke-width=".8"/><circle cx="7.300" cy="4.300" r="1.200" fill="#fff"/><path d="M5.500 6.800h2.900v4.700h1.100v1.100h-4.200v-1.100h1.300v-3.600h-1.100z" fill="#fff"/></svg>
<svg style="left:1244px;top:541px;" width="16" height="17" viewBox="0 0 16 17"><path d="M.5 2.500h5.500v-2h4l4.500 4.500v10.500h-8v-2h-6z" fill="#f1f1f1" stroke="#a9a9a9" stroke-width=".9"/><path d="M6 2.500l3.500 3.500v7.500M10 .5v4.500h4.500M6 2.500v3.500h3.500" fill="none" stroke="#a9a9a9" stroke-width=".8"/></svg>
<svg style="left:1265px;top:541px;" width="16" height="16" viewBox="0 0 16 16"><path d="M1 4l4-3h9.500l-4 3z" fill="#d9d9d9" stroke="#8f8f8f" stroke-width=".7"/><path d="M1 4h9.500v10.500h-9.500z" fill="#c4c4c4" stroke="#8f8f8f" stroke-width=".7"/><path d="M10.500 4l4-3v10.500l-4 3z" fill="#b4b4b4" stroke="#8f8f8f" stroke-width=".7"/></svg>
<svg style="left:1284px;top:541px;" width="17" height="16" viewBox="0 0 17 16"><circle cx="8.500" cy="3.500" r="3" fill="#c4c4c4"/><circle cx="3.500" cy="11.500" r="3.200" fill="#d9d9d9"/><circle cx="12.500" cy="11.800" r="3.600" fill="#9f9f9f"/></svg>
<svg style="left:1304px;top:541px;" width="17" height="16" viewBox="0 0 17 16"><path d="M.5 8v-7.500h5l1 1.500h5v6z" fill="#c4c4c4" stroke="#a4a4a4" stroke-width=".7"/><path d="M2.500 8v3q4 5 9 2l.5 2 4-4.500-5.500-2 .5 2q-3 1.500-5.500-2.500z" fill="#b4b4b4" stroke="#9a9a9a" stroke-width=".5"/></svg>
<svg style="left:1325px;top:542px;" width="15" height="15" viewBox="0 0 15 15"><circle cx="7.500" cy="7.500" r="7.200" fill="url(#gGy)"/><circle cx="7.500" cy="7" r="6.500" fill="#b9b9b9" opacity=".55"/><path d="M3.800 5.800h7.400l-3.700 4.200z" fill="#111"/></svg>
<div style="left:1007px;top:567px;width:337px;height:1px;background:repeating-linear-gradient(90deg,#a0a0a0 0,#a0a0a0 2px,transparent 2px,transparent 4px);"></div>
<div style="left:1007px;top:568px;width:337px;height:1px;background:repeating-linear-gradient(90deg,#d0d0d0 0,#d0d0d0 2px,transparent 2px,transparent 4px);"></div>
<div style="left:1006px;top:571px;width:67px;height:24px;background:#fff;"></div>
<div style="left:1005px;top:569px;width:1px;height:23px;background:#808898;"></div>
<div style="left:1073px;top:571px;width:1px;height:21px;background:#9aa0aa;"></div>
<span class="tab" style="left:1014px;top:576px;">Contrast</span>
<div class="btab" style="left:1074px;top:572px;width:116px;height:20px;"></div>
<span class="tab" style="left:1082px;top:577px;">Volume Rendering</span>
<div class="btab" style="left:1191px;top:572px;width:68px;height:20px;"></div>
<span class="tab" style="left:1200px;top:577px;">Clipping</span>
<div class="btab" style="left:1260px;top:572px;width:68px;height:20px;"></div>
<span class="tab" style="left:1268px;top:577px;">Snapping</span>
<svg style="left:0;top:0" width="1366" height="738" viewBox="0 0 1366 738"><rect x="1007.5" y="595.5" width="334" height="100" fill="#fff" stroke="#000" stroke-width="1"/><path d="M1024 696 L1024 624 L1028.5 624 L1031.5 628 L1038 632.7 L1047.5 635.5 L1057 636.8 L1074 636.5 L1080.6 635 L1082.5 626 L1087.2 619.4 L1091.6 613.7 L1093 597.6 L1094.2 596 L1096.7 604.2 L1098.2 622.2 L1102.4 628.9 L1109 629.8 L1113.4 625 L1115.7 618.8 L1118.5 627.9 L1121.4 634.6 L1136.5 635.1 L1151.7 636 L1191 636.8 L1200.6 638.9 L1207.3 643.1 L1215.8 652.6 L1227.2 660.2 L1236.7 664.3 L1251.8 668.1 L1263.2 669.3 L1282.2 671.5 L1308.7 671.9 L1327.7 674.4 L1339 677.2 L1339.5 626 L1341 626 L1341 696Z" fill="#808080"/><rect x="1126" y="634.3" width="1" height="1.4" fill="#808080"/><rect x="1127" y="634.5" width="1" height="1.3" fill="#808080"/><rect x="1128" y="634.4" width="1" height="1.5" fill="#808080"/><rect x="1129" y="634.4" width="1" height="1.5" fill="#808080"/><rect x="1132" y="634.3" width="1" height="1.7" fill="#808080"/><rect x="1135" y="634.3" width="1" height="1.8" fill="#808080"/><rect x="1136" y="634.7" width="1" height="1.4" fill="#808080"/><rect x="1137" y="634.5" width="1" height="1.7" fill="#808080"/><rect x="1138" y="634.8" width="1" height="1.4" fill="#808080"/><rect x="1139" y="634.8" width="1" height="1.5" fill="#808080"/><rect x="1141" y="634.9" width="1" height="1.5" fill="#808080"/><rect x="1142" y="634.8" width="1" height="1.7" fill="#808080"/><rect x="1143" y="635.1" width="1" height="1.4" fill="#808080"/><rect x="1144" y="635.0" width="1" height="1.6" fill="#808080"/><rect x="1145" y="635.1" width="1" height="1.5" fill="#808080"/><rect x="1147" y="635.1" width="1" height="1.6" fill="#808080"/><rect x="1148" y="635.3" width="1" height="1.5" fill="#808080"/><rect x="1151" y="635.3" width="1" height="1.7" fill="#808080"/><rect x="1152" y="635.6" width="1" height="1.4" fill="#808080"/><rect x="1153" y="635.5" width="1" height="1.6" fill="#808080"/><rect x="1154" y="635.4" width="1" height="1.7" fill="#808080"/><rect x="1155" y="635.5" width="1" height="1.6" fill="#808080"/><rect x="1156" y="635.4" width="1" height="1.7" fill="#808080"/><rect x="1157" y="635.8" width="1" height="1.3" fill="#808080"/><rect x="1158" y="635.5" width="1" height="1.6" fill="#808080"/><rect x="1159" y="635.8" width="1" height="1.4" fill="#808080"/><rect x="1160" y="635.4" width="1" height="1.7" fill="#808080"/><rect x="1161" y="635.5" width="1" height="1.7" fill="#808080"/><rect x="1165" y="635.5" width="1" height="1.8" fill="#808080"/><rect x="1166" y="636.0" width="1" height="1.3" fill="#808080"/><rect x="1167" y="635.8" width="1" height="1.5" fill="#808080"/><rect x="1169" y="636.0" width="1" height="1.4" fill="#808080"/><rect x="1170" y="636.1" width="1" height="1.3" fill="#808080"/><rect x="1171" y="636.1" width="1" height="1.3" fill="#808080"/><rect x="1172" y="636.0" width="1" height="1.5" fill="#808080"/><rect x="1173" y="636.0" width="1" height="1.5" fill="#808080"/><rect x="1174" y="635.7" width="1" height="1.7" fill="#808080"/><rect x="1175" y="635.9" width="1" height="1.5" fill="#808080"/><rect x="1176" y="635.8" width="1" height="1.7" fill="#808080"/><rect x="1177" y="635.8" width="1" height="1.7" fill="#808080"/><rect x="1178" y="635.8" width="1" height="1.8" fill="#808080"/><rect x="1179" y="636.0" width="1" height="1.5" fill="#808080"/><rect x="1181" y="635.9" width="1" height="1.7" fill="#808080"/><rect x="1182" y="635.9" width="1" height="1.8" fill="#808080"/><rect x="1183" y="635.9" width="1" height="1.7" fill="#808080"/><rect x="1184" y="636.2" width="1" height="1.5" fill="#808080"/><rect x="1185" y="636.1" width="1" height="1.6" fill="#808080"/><rect x="1187" y="636.1" width="1" height="1.7" fill="#808080"/><rect x="1188" y="636.3" width="1" height="1.5" fill="#808080"/><rect x="1191" y="636.2" width="1" height="1.7" fill="#808080"/><rect x="1192" y="636.3" width="1" height="1.8" fill="#808080"/><rect x="1194" y="636.9" width="1" height="1.6" fill="#808080"/><rect x="1195" y="637.5" width="1" height="1.3" fill="#808080"/><rect x="1198" y="637.8" width="1" height="1.6" fill="#808080"/><rect x="1199" y="638.0" width="1" height="1.7" fill="#808080"/><rect x="1201" y="639.0" width="1" height="1.5" fill="#808080"/><rect x="1203" y="640.1" width="1" height="1.6" fill="#808080"/><rect x="1204" y="641.1" width="1" height="1.3" fill="#808080"/><rect x="1205" y="641.3" width="1" height="1.7" fill="#808080"/><rect x="1206" y="641.8" width="1" height="1.8" fill="#808080"/><rect x="1207" y="642.9" width="1" height="1.4" fill="#808080"/><rect x="1208" y="643.6" width="1" height="1.8" fill="#808080"/><rect x="1211" y="647.3" width="1" height="1.5" fill="#808080"/><rect x="1214" y="650.8" width="1" height="1.3" fill="#808080"/><rect x="1215" y="650.8" width="1" height="2.5" fill="#808080"/><rect x="1216" y="652.7" width="1" height="1.4" fill="#808080"/><rect x="1218" y="652.3" width="1" height="3.1" fill="#808080"/><rect x="1219" y="654.3" width="1" height="1.8" fill="#808080"/><rect x="1220" y="653.4" width="1" height="3.3" fill="#808080"/><rect x="1221" y="654.2" width="1" height="3.2" fill="#808080"/><rect x="1222" y="656.2" width="1" height="1.9" fill="#808080"/><rect x="1223" y="656.6" width="1" height="2.1" fill="#808080"/><rect x="1224" y="657.2" width="1" height="2.2" fill="#808080"/><rect x="1225" y="657.5" width="1" height="2.5" fill="#808080"/><rect x="1226" y="658.3" width="1" height="2.4" fill="#808080"/><rect x="1227" y="659.0" width="1" height="2.3" fill="#808080"/><rect x="1228" y="659.3" width="1" height="2.5" fill="#808080"/><rect x="1229" y="658.9" width="1" height="3.3" fill="#808080"/><rect x="1230" y="660.4" width="1" height="2.2" fill="#808080"/><rect x="1231" y="661.0" width="1" height="2.0" fill="#808080"/><rect x="1232" y="660.8" width="1" height="2.7" fill="#808080"/><rect x="1233" y="662.3" width="1" height="1.6" fill="#808080"/><rect x="1234" y="662.6" width="1" height="1.7" fill="#808080"/><rect x="1235" y="661.4" width="1" height="3.3" fill="#808080"/><rect x="1236" y="663.0" width="1" height="2.3" fill="#808080"/><rect x="1237" y="663.2" width="1" height="2.3" fill="#808080"/><rect x="1239" y="664.0" width="1" height="2.0" fill="#808080"/><rect x="1240" y="663.9" width="1" height="2.4" fill="#808080"/><rect x="1242" y="664.3" width="1" height="2.5" fill="#808080"/><rect x="1243" y="664.5" width="1" height="2.5" fill="#808080"/><rect x="1245" y="665.0" width="1" height="2.5" fill="#808080"/><rect x="1246" y="665.6" width="1" height="2.1" fill="#808080"/><rect x="1247" y="665.4" width="1" height="2.6" fill="#808080"/><rect x="1248" y="666.4" width="1" height="1.8" fill="#808080"/><rect x="1249" y="665.8" width="1" height="2.7" fill="#808080"/><rect x="1250" y="666.0" width="1" height="2.8" fill="#808080"/><rect x="1253" y="666.7" width="1" height="2.6" fill="#808080"/><rect x="1254" y="666.1" width="1" height="3.3" fill="#808080"/><rect x="1255" y="667.9" width="1" height="1.6" fill="#808080"/><rect x="1256" y="667.5" width="1" height="2.1" fill="#808080"/><rect x="1257" y="667.3" width="1" height="2.4" fill="#808080"/><rect x="1258" y="668.0" width="1" height="1.8" fill="#808080"/><rect x="1259" y="668.0" width="1" height="1.9" fill="#808080"/><rect x="1260" y="668.3" width="1" height="1.8" fill="#808080"/><rect x="1261" y="668.2" width="1" height="1.9" fill="#808080"/><rect x="1262" y="667.8" width="1" height="2.4" fill="#808080"/><rect x="1263" y="668.6" width="1" height="1.7" fill="#808080"/><rect x="1264" y="668.5" width="1" height="1.9" fill="#808080"/><rect x="1265" y="667.7" width="1" height="2.9" fill="#808080"/><rect x="1267" y="668.4" width="1" height="2.4" fill="#808080"/><rect x="1268" y="668.1" width="1" height="2.8" fill="#808080"/><rect x="1269" y="669.3" width="1" height="1.7" fill="#808080"/><rect x="1270" y="669.6" width="1" height="1.5" fill="#808080"/><rect x="1271" y="668.3" width="1" height="2.9" fill="#808080"/><rect x="1272" y="669.8" width="1" height="1.6" fill="#808080"/><rect x="1273" y="670.0" width="1" height="1.4" fill="#808080"/><rect x="1274" y="669.6" width="1" height="2.0" fill="#808080"/><rect x="1275" y="669.0" width="1" height="2.7" fill="#808080"/><rect x="1277" y="670.2" width="1" height="1.8" fill="#808080"/><rect x="1278" y="670.3" width="1" height="1.8" fill="#808080"/><rect x="1279" y="669.2" width="1" height="3.0" fill="#808080"/><rect x="1280" y="670.3" width="1" height="2.1" fill="#808080"/><rect x="1281" y="669.4" width="1" height="3.1" fill="#808080"/><rect x="1282" y="671.1" width="1" height="1.4" fill="#808080"/><rect x="1283" y="670.7" width="1" height="1.8" fill="#808080"/><rect x="1284" y="670.0" width="1" height="2.6" fill="#808080"/><rect x="1285" y="669.4" width="1" height="3.1" fill="#808080"/><rect x="1286" y="670.5" width="1" height="2.1" fill="#808080"/><rect x="1287" y="671.0" width="1" height="1.5" fill="#808080"/><rect x="1288" y="671.3" width="1" height="1.3" fill="#808080"/><rect x="1289" y="670.3" width="1" height="2.3" fill="#808080"/><rect x="1290" y="671.2" width="1" height="1.5" fill="#808080"/><rect x="1291" y="669.7" width="1" height="2.9" fill="#808080"/><rect x="1292" y="669.6" width="1" height="3.0" fill="#808080"/><rect x="1293" y="671.2" width="1" height="1.4" fill="#808080"/><rect x="1294" y="671.0" width="1" height="1.7" fill="#808080"/><rect x="1295" y="669.8" width="1" height="2.9" fill="#808080"/><rect x="1296" y="670.2" width="1" height="2.5" fill="#808080"/><rect x="1297" y="669.8" width="1" height="2.9" fill="#808080"/><rect x="1298" y="670.9" width="1" height="1.8" fill="#808080"/><rect x="1299" y="671.4" width="1" height="1.3" fill="#808080"/><rect x="1300" y="671.1" width="1" height="1.7" fill="#808080"/><rect x="1301" y="669.9" width="1" height="2.9" fill="#808080"/><rect x="1302" y="671.2" width="1" height="1.7" fill="#808080"/><rect x="1303" y="671.0" width="1" height="1.8" fill="#808080"/><rect x="1304" y="670.8" width="1" height="2.0" fill="#808080"/><rect x="1305" y="670.8" width="1" height="2.0" fill="#808080"/><rect x="1306" y="670.9" width="1" height="2.0" fill="#808080"/><rect x="1307" y="669.7" width="1" height="3.2" fill="#808080"/><rect x="1308" y="671.5" width="1" height="1.4" fill="#808080"/><rect x="1310" y="669.9" width="1" height="3.3" fill="#808080"/><rect x="1311" y="670.2" width="1" height="3.1" fill="#808080"/><rect x="1312" y="670.0" width="1" height="3.4" fill="#808080"/><rect x="1313" y="671.5" width="1" height="2.0" fill="#808080"/><rect x="1314" y="670.4" width="1" height="3.3" fill="#808080"/><rect x="1315" y="670.6" width="1" height="3.2" fill="#808080"/><rect x="1316" y="672.4" width="1" height="1.5" fill="#808080"/><rect x="1317" y="671.3" width="1" height="2.8" fill="#808080"/><rect x="1318" y="671.2" width="1" height="3.0" fill="#808080"/><rect x="1319" y="671.7" width="1" height="2.6" fill="#808080"/><rect x="1320" y="672.2" width="1" height="2.2" fill="#808080"/><rect x="1321" y="672.9" width="1" height="1.7" fill="#808080"/><rect x="1322" y="672.9" width="1" height="1.8" fill="#808080"/><rect x="1323" y="673.3" width="1" height="1.5" fill="#808080"/><rect x="1325" y="672.7" width="1" height="2.4" fill="#808080"/><rect x="1326" y="673.6" width="1" height="1.7" fill="#808080"/><rect x="1327" y="672.4" width="1" height="2.9" fill="#808080"/><rect x="1329" y="672.7" width="1" height="3.2" fill="#808080"/><rect x="1330" y="673.4" width="1" height="2.7" fill="#808080"/><rect x="1331" y="673.1" width="1" height="3.2" fill="#808080"/><rect x="1332" y="673.4" width="1" height="3.2" fill="#808080"/><rect x="1333" y="673.7" width="1" height="3.2" fill="#808080"/><rect x="1334" y="674.7" width="1" height="2.4" fill="#808080"/><rect x="1336" y="674.8" width="1" height="2.8" fill="#808080"/><rect x="1337" y="676.4" width="1" height="1.4" fill="#808080"/><rect x="1338" y="676.4" width="1" height="1.7" fill="#808080"/><rect x="1263" y="635" width="1" height="40" fill="#808080"/><path d="M1008.5 694L1340 598.5" stroke="#000" stroke-width="1.3" fill="none"/><rect x="1007.5" y="595.5" width="334" height="100" fill="none" stroke="#000" stroke-width="1"/><rect x="1007" y="695" width="335" height="1.6" fill="#000"/><circle cx="1010.5" cy="692.5" r="2.1" fill="#fff" stroke="#000" stroke-width="1.3"/><circle cx="1338.8" cy="598.8" r="2.1" fill="#fff" stroke="#000" stroke-width="1.3"/><rect x="1008" y="696" width="1" height="5" fill="#000"/><rect x="1091" y="696" width="1" height="5" fill="#000"/><rect x="1172" y="696" width="1" height="5" fill="#000"/><rect x="1253" y="696" width="1" height="5" fill="#000"/><rect x="1341" y="696" width="1" height="5" fill="#000"/></svg>
<span class="lbl" style="left:1010px;top:701px;font-size:10.6px;color:#101020;">-1023</span>
<span class="lbl" style="left:1071px;top:701px;font-size:10.6px;color:#101020;width:40px;text-align:center;">0</span>
<span class="lbl" style="left:1152px;top:701px;font-size:10.6px;color:#101020;width:40px;text-align:center;">1000</span>
<span class="lbl" style="left:1233px;top:701px;font-size:10.6px;color:#101020;width:40px;text-align:center;">2000</span>
<span class="lbl" style="left:1298px;top:701px;font-size:10.6px;color:#101020;width:40px;text-align:right;">3071</span>
<div style="left:0px;top:593px;width:1000px;height:123px;background:#fff;"></div>
<div style="left:0px;top:593px;width:1px;height:123px;background:#696969;"></div>
<div style="left:1000px;top:593px;width:4px;height:123px;background:#f0f0f0;"></div>
<div style="left:983px;top:593px;width:17px;height:123px;background:#f0f0f0;"></div>
<div style="left:983px;top:620px;width:16px;height:76px;background:#cdcdcd;"></div>
<svg style="left:0;top:0" width="1366" height="738" viewBox="0 0 1366 738"><path d="M987.7 604.3L991 600.4L994.3 604.3" stroke="#5a5a5a" stroke-width="2.3" fill="none"/></svg>
<svg style="left:0;top:0" width="1366" height="738" viewBox="0 0 1366 738"><path d="M987.7 705.7L991 709.6L994.3 705.7" stroke="#5a5a5a" stroke-width="2.3" fill="none"/></svg>
<div style="left:143px;top:593px;width:3px;height:2px;background:#555;"></div>
<div style="left:151px;top:593px;width:2px;height:2px;background:#666;"></div>
<div style="left:210px;top:593px;width:3px;height:2px;background:#555;"></div>
<span class="log" style="left:7px;top:599.5px;">[14:55:02] <b>New Project Wizard</b></span>
<span class="log" style="left:7px;top:614.5px;">[14:58:42] <b>Project edition information</b></span>
<span class="log" style="left:7px;top:629.5px;">    Project created in: Mimics Research 20.0</span>
<span class="log" style="left:7px;top:644.5px;">    Project last modified in: Mimics Research 20.0</span>
<span class="log" style="left:7px;top:659.5px;">    Edition: Research</span>
<span class="log" style="left:7px;top:674.5px;">[14:58:49] <b>Open project</b></span>
<span class="log" style="left:7px;top:689.5px;">    file name: D:\mimicsdata\CHEN_JUN_YU 001.mcs</span>
<div style="left:0px;top:716px;width:1366px;height:1px;background:#fff;"></div>
<div style="left:0px;top:717px;width:1366px;height:19px;background:#f0f0f0;"></div>
<div style="left:999px;top:719px;width:1px;height:16px;background:#fff;"></div>
<div style="left:1207px;top:719px;width:1px;height:16px;background:#fff;"></div>
<div style="left:1210px;top:720px;width:156px;height:16px;background:#e6e6e6;border-left:1px solid #a8a8a8;border-top:1px solid #a8a8a8;border-bottom:1px solid #fff;border-right:1px solid #c8c8c8;"></div>
<div style="left:0px;top:736px;width:1366px;height:2px;background:#15202c;"></div>
</body></html>
